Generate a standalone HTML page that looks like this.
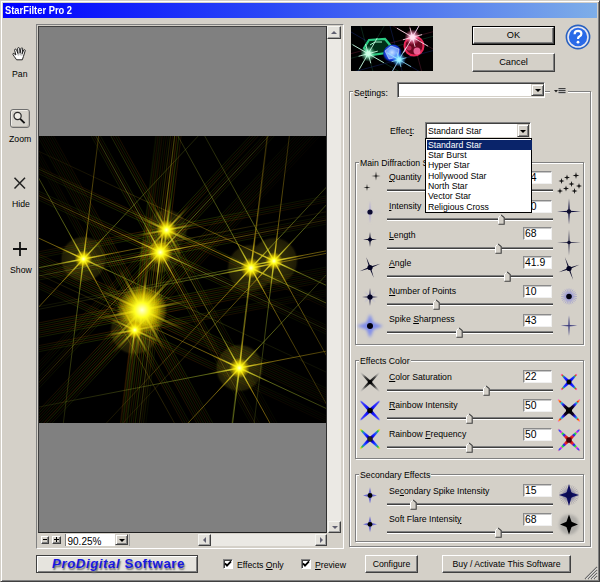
<!DOCTYPE html>
<html><head><meta charset="utf-8">
<style>
*{margin:0;padding:0;box-sizing:border-box}
html,body{width:600px;height:582px;overflow:hidden;background:#d4d0c8}
body{position:relative;font-family:"Liberation Sans",sans-serif;font-size:8.7px;color:#000}
.a{position:absolute}
.t{position:absolute;white-space:nowrap;font-size:8.7px;line-height:10px}
.btn{position:absolute;background:#d4d0c8;border-top:1px solid #fff;border-left:1px solid #fff;border-right:1px solid #404040;border-bottom:1px solid #404040;box-shadow:inset -1px -1px 0 #808080;text-align:center;font-size:8.7px}
.sunk{position:absolute;border-top:1px solid #808080;border-left:1px solid #808080;border-right:1px solid #fff;border-bottom:1px solid #fff;box-shadow:inset 1px 1px 0 #404040, inset -1px -1px 0 #d4d0c8}
.grp{position:absolute;border:1px solid #808080;box-shadow:1px 1px 0 #fff, inset 1px 1px 0 #fff}
.gl{position:absolute;background:#d4d0c8;padding:0 1px;font-size:8.7px;line-height:10px;white-space:nowrap}
.track{position:absolute;height:3px;border-top:1px solid #808080;border-bottom:1px solid #fff;background:#404040}
.thumb{position:absolute;width:7px;height:10px}
.edit{position:absolute;width:29px;height:13px;background:#fff;border-top:1px solid #8a8a8a;border-left:1px solid #8a8a8a;border-right:1px solid #f0f0f0;border-bottom:1px solid #f0f0f0;box-shadow:inset 1px 1px 0 #c8c8c8;font-size:10.4px;line-height:12px;padding:0 0 0 1px}
.ddb{position:absolute;background:#d4d0c8;border-top:1px solid #d4d0c8;border-left:1px solid #d4d0c8;border-right:1px solid #404040;border-bottom:1px solid #404040;box-shadow:inset 1px 1px 0 #fff, inset -1px -1px 0 #808080}
.ddb:after{content:"";position:absolute;left:50%;top:50%;margin-left:-3px;margin-top:-1px;border-left:3px solid transparent;border-right:3px solid transparent;border-top:3px solid #000}
.sb{position:absolute;background:#e4e2dc;border-top:1px solid #f4f4f0;border-left:1px solid #f4f4f0;border-right:1px solid #404040;border-bottom:1px solid #404040;box-shadow:inset -1px -1px 0 #a0a0a0}
.sb:after{content:"";position:absolute;left:50%;top:50%}
.sb.up:after{margin-left:-3px;margin-top:-2px;border-left:3px solid transparent;border-right:3px solid transparent;border-bottom:3px solid #606070}
.sb.dn:after{margin-left:-3px;margin-top:-1px;border-left:3px solid transparent;border-right:3px solid transparent;border-top:3px solid #606070}
.sb.lf:after{margin-left:-2px;margin-top:-3px;border-top:3px solid transparent;border-bottom:3px solid transparent;border-right:3px solid #606070}
.sb.rt:after{margin-left:-1px;margin-top:-3px;border-top:3px solid transparent;border-bottom:3px solid transparent;border-left:3px solid #606070}
u{text-decoration:underline}
.li{position:absolute;left:1px;width:105px;height:10px;line-height:10px;padding-left:1px;white-space:nowrap;font-size:8.7px}
</style></head><body>
<!-- window frame -->
<div class="a" style="left:0;top:0;width:600px;height:582px;border-top:1px solid #d4d0c8;border-left:1px solid #d4d0c8;border-right:1px solid #404040;border-bottom:1px solid #404040;box-shadow:inset 1px 1px 0 #fff, inset -1px -1px 0 #808080"></div>
<!-- title bar -->
<div class="a" style="left:3px;top:3px;width:594px;height:15px;background:linear-gradient(90deg,#0000ff 0%,#2a48f6 45%,#7eaee8 100%)"></div>
<div class="t" style="left:5px;top:4.5px;font-weight:bold;color:#fff;font-size:10px;line-height:12px;transform:scaleX(0.935);transform-origin:0 0">StarFilter Pro 2</div>

<!-- left toolbar -->
<svg class="a" style="left:12px;top:47px" width="15" height="14" viewBox="0 0 15 14">
<path d="M4.6 12.8 L2.2 9.4 L0.9 7.4 Q0.7 6.3 1.8 6.4 L3.9 8 L2.6 3.2 Q2.6 2 3.6 2.1 Q4.3 2.2 4.6 3 L6 6.6 L5.6 1.6 Q5.7 0.6 6.6 0.6 Q7.5 0.7 7.6 1.6 L8.1 6.2 L9 1.4 Q9.3 0.7 10.1 0.9 Q10.8 1.1 10.7 2 L10.1 6.8 L11.7 3.1 Q12.2 2.4 12.9 2.8 Q13.5 3.3 13.1 4.1 L11.4 9.6 L10.3 12.8 Z" fill="#fff" stroke="#1a1a1a" stroke-width="0.95" stroke-linejoin="round"/>
<path d="M6 6.6 L6.3 8.5 M8.1 6.2 L8.2 8.3 M10.1 6.8 L9.8 8.6" stroke="#555" stroke-width="0.6"/>
</svg>
<div class="t" style="left:12px;top:69px">Pan</div>
<div class="a" style="left:10px;top:109px;width:20px;height:19px;border:1.5px solid #6e6e6e;border-radius:3px;background:#d6d3cc;box-shadow:inset 1px 1px 0 #f0eee8, inset -1px -1px 0 #b8b4ac"></div>
<svg class="a" style="left:12px;top:110px" width="16" height="16" viewBox="0 0 16 16">
<circle cx="5.6" cy="6" r="3.6" fill="#eeece6" stroke="#2a2a2a" stroke-width="1.2"/>
<line x1="8.2" y1="8.8" x2="12.6" y2="13.2" stroke="#111" stroke-width="1.9"/>
</svg>
<div class="t" style="left:9px;top:134px">Zoom</div>
<svg class="a" style="left:13px;top:177px" width="14" height="13" viewBox="0 0 14 13">
<path d="M1.5 0.8 L12 11.5 M12 0.8 L1.5 11.5" stroke="#222" stroke-width="1.5"/>
</svg>
<div class="t" style="left:12px;top:199px">Hide</div>
<svg class="a" style="left:12px;top:241px" width="16" height="16" viewBox="0 0 16 16">
<path d="M8 1 V15 M1 8 H15" stroke="#111" stroke-width="1.8"/>
</svg>
<div class="t" style="left:10px;top:265px">Show</div>

<!-- viewport -->
<div class="a" style="left:36px;top:24px;width:308px;height:525px;border-top:1px solid #808080;border-left:1px solid #808080;border-right:1px solid #fff;border-bottom:1px solid #fff;background:#d4d0c8"></div>
<div class="a" style="left:38px;top:26px;width:290px;height:507px;border-top:1px solid #404040;border-left:1px solid #404040;border-right:1px solid #202020;border-bottom:1px solid #202020;background:#808080"></div>
<div id="stars" class="a" style="left:39px;top:136px;width:288px;height:287px;background:#000"><svg width="288" height="287" viewBox="0 0 288 287" style="display:block"><defs><filter id="sb" x="-10%" y="-10%" width="120%" height="120%"><feGaussianBlur stdDeviation="0.45"/></filter><radialGradient id="halo"><stop offset="0" stop-color="#4a4408"/><stop offset="0.6" stop-color="#302c08"/><stop offset="0.88" stop-color="#242006"/><stop offset="1" stop-color="#000" stop-opacity="0"/></radialGradient><radialGradient id="core"><stop offset="0" stop-color="#ffffd0"/><stop offset="0.3" stop-color="#ffff20"/><stop offset="0.6" stop-color="#f0d800" stop-opacity="0.7"/><stop offset="1" stop-color="#c0a000" stop-opacity="0"/></radialGradient><radialGradient id="fade"><stop offset="0" stop-color="#fff"/><stop offset="0.1" stop-color="#c0c0c0"/><stop offset="0.3" stop-color="#707070"/><stop offset="0.6" stop-color="#303030"/><stop offset="1" stop-color="#101010"/></radialGradient><mask id="m0" maskUnits="userSpaceOnUse" x="0" y="0" width="288" height="287"><circle cx="44.5" cy="123.0" r="320" fill="url(#fade)"/></mask><linearGradient id="g1" gradientUnits="userSpaceOnUse" x1="44.5" y1="123.0" x2="73.1" y2="136.4"><stop offset="0" stop-color="#ffff40"/><stop offset="1" stop-color="#c0a000" stop-opacity="0"/></linearGradient><linearGradient id="g2" gradientUnits="userSpaceOnUse" x1="44.5" y1="123.0" x2="59.8" y2="150.6"><stop offset="0" stop-color="#ffff40"/><stop offset="1" stop-color="#c0a000" stop-opacity="0"/></linearGradient><linearGradient id="g3" gradientUnits="userSpaceOnUse" x1="44.5" y1="123.0" x2="40.6" y2="154.4"><stop offset="0" stop-color="#ffff40"/><stop offset="1" stop-color="#c0a000" stop-opacity="0"/></linearGradient><linearGradient id="g4" gradientUnits="userSpaceOnUse" x1="44.5" y1="123.0" x2="22.9" y2="146.1"><stop offset="0" stop-color="#ffff40"/><stop offset="1" stop-color="#c0a000" stop-opacity="0"/></linearGradient><linearGradient id="g5" gradientUnits="userSpaceOnUse" x1="44.5" y1="123.0" x2="13.5" y2="129.0"><stop offset="0" stop-color="#ffff40"/><stop offset="1" stop-color="#c0a000" stop-opacity="0"/></linearGradient><linearGradient id="g6" gradientUnits="userSpaceOnUse" x1="44.5" y1="123.0" x2="15.9" y2="109.6"><stop offset="0" stop-color="#ffff40"/><stop offset="1" stop-color="#c0a000" stop-opacity="0"/></linearGradient><linearGradient id="g7" gradientUnits="userSpaceOnUse" x1="44.5" y1="123.0" x2="29.2" y2="95.4"><stop offset="0" stop-color="#ffff40"/><stop offset="1" stop-color="#c0a000" stop-opacity="0"/></linearGradient><linearGradient id="g8" gradientUnits="userSpaceOnUse" x1="44.5" y1="123.0" x2="48.4" y2="91.6"><stop offset="0" stop-color="#ffff40"/><stop offset="1" stop-color="#c0a000" stop-opacity="0"/></linearGradient><linearGradient id="g9" gradientUnits="userSpaceOnUse" x1="44.5" y1="123.0" x2="66.1" y2="99.9"><stop offset="0" stop-color="#ffff40"/><stop offset="1" stop-color="#c0a000" stop-opacity="0"/></linearGradient><linearGradient id="g10" gradientUnits="userSpaceOnUse" x1="44.5" y1="123.0" x2="75.5" y2="117.0"><stop offset="0" stop-color="#ffff40"/><stop offset="1" stop-color="#c0a000" stop-opacity="0"/></linearGradient><mask id="m1" maskUnits="userSpaceOnUse" x="0" y="0" width="288" height="287"><circle cx="127.5" cy="94.0" r="320" fill="url(#fade)"/></mask><linearGradient id="g11" gradientUnits="userSpaceOnUse" x1="127.5" y1="94.0" x2="157.6" y2="108.0"><stop offset="0" stop-color="#ffff40"/><stop offset="1" stop-color="#c0a000" stop-opacity="0"/></linearGradient><linearGradient id="g12" gradientUnits="userSpaceOnUse" x1="127.5" y1="94.0" x2="143.6" y2="123.0"><stop offset="0" stop-color="#ffff40"/><stop offset="1" stop-color="#c0a000" stop-opacity="0"/></linearGradient><linearGradient id="g13" gradientUnits="userSpaceOnUse" x1="127.5" y1="94.0" x2="123.5" y2="127.0"><stop offset="0" stop-color="#ffff40"/><stop offset="1" stop-color="#c0a000" stop-opacity="0"/></linearGradient><linearGradient id="g14" gradientUnits="userSpaceOnUse" x1="127.5" y1="94.0" x2="104.9" y2="118.3"><stop offset="0" stop-color="#ffff40"/><stop offset="1" stop-color="#c0a000" stop-opacity="0"/></linearGradient><linearGradient id="g15" gradientUnits="userSpaceOnUse" x1="127.5" y1="94.0" x2="94.9" y2="100.3"><stop offset="0" stop-color="#ffff40"/><stop offset="1" stop-color="#c0a000" stop-opacity="0"/></linearGradient><linearGradient id="g16" gradientUnits="userSpaceOnUse" x1="127.5" y1="94.0" x2="97.4" y2="80.0"><stop offset="0" stop-color="#ffff40"/><stop offset="1" stop-color="#c0a000" stop-opacity="0"/></linearGradient><linearGradient id="g17" gradientUnits="userSpaceOnUse" x1="127.5" y1="94.0" x2="111.4" y2="65.0"><stop offset="0" stop-color="#ffff40"/><stop offset="1" stop-color="#c0a000" stop-opacity="0"/></linearGradient><linearGradient id="g18" gradientUnits="userSpaceOnUse" x1="127.5" y1="94.0" x2="131.5" y2="61.0"><stop offset="0" stop-color="#ffff40"/><stop offset="1" stop-color="#c0a000" stop-opacity="0"/></linearGradient><linearGradient id="g19" gradientUnits="userSpaceOnUse" x1="127.5" y1="94.0" x2="150.1" y2="69.7"><stop offset="0" stop-color="#ffff40"/><stop offset="1" stop-color="#c0a000" stop-opacity="0"/></linearGradient><linearGradient id="g20" gradientUnits="userSpaceOnUse" x1="127.5" y1="94.0" x2="160.1" y2="87.7"><stop offset="0" stop-color="#ffff40"/><stop offset="1" stop-color="#c0a000" stop-opacity="0"/></linearGradient><mask id="m2" maskUnits="userSpaceOnUse" x="0" y="0" width="288" height="287"><circle cx="121.3" cy="116.3" r="320" fill="url(#fade)"/></mask><linearGradient id="g21" gradientUnits="userSpaceOnUse" x1="121.3" y1="116.3" x2="153.4" y2="131.3"><stop offset="0" stop-color="#ffff40"/><stop offset="1" stop-color="#c0a000" stop-opacity="0"/></linearGradient><linearGradient id="g22" gradientUnits="userSpaceOnUse" x1="121.3" y1="116.3" x2="138.5" y2="147.3"><stop offset="0" stop-color="#ffff40"/><stop offset="1" stop-color="#c0a000" stop-opacity="0"/></linearGradient><linearGradient id="g23" gradientUnits="userSpaceOnUse" x1="121.3" y1="116.3" x2="117.0" y2="151.5"><stop offset="0" stop-color="#ffff40"/><stop offset="1" stop-color="#c0a000" stop-opacity="0"/></linearGradient><linearGradient id="g24" gradientUnits="userSpaceOnUse" x1="121.3" y1="116.3" x2="97.1" y2="142.2"><stop offset="0" stop-color="#ffff40"/><stop offset="1" stop-color="#c0a000" stop-opacity="0"/></linearGradient><linearGradient id="g25" gradientUnits="userSpaceOnUse" x1="121.3" y1="116.3" x2="86.5" y2="123.1"><stop offset="0" stop-color="#ffff40"/><stop offset="1" stop-color="#c0a000" stop-opacity="0"/></linearGradient><linearGradient id="g26" gradientUnits="userSpaceOnUse" x1="121.3" y1="116.3" x2="89.2" y2="101.3"><stop offset="0" stop-color="#ffff40"/><stop offset="1" stop-color="#c0a000" stop-opacity="0"/></linearGradient><linearGradient id="g27" gradientUnits="userSpaceOnUse" x1="121.3" y1="116.3" x2="104.1" y2="85.3"><stop offset="0" stop-color="#ffff40"/><stop offset="1" stop-color="#c0a000" stop-opacity="0"/></linearGradient><linearGradient id="g28" gradientUnits="userSpaceOnUse" x1="121.3" y1="116.3" x2="125.6" y2="81.1"><stop offset="0" stop-color="#ffff40"/><stop offset="1" stop-color="#c0a000" stop-opacity="0"/></linearGradient><linearGradient id="g29" gradientUnits="userSpaceOnUse" x1="121.3" y1="116.3" x2="145.5" y2="90.4"><stop offset="0" stop-color="#ffff40"/><stop offset="1" stop-color="#c0a000" stop-opacity="0"/></linearGradient><linearGradient id="g30" gradientUnits="userSpaceOnUse" x1="121.3" y1="116.3" x2="156.1" y2="109.5"><stop offset="0" stop-color="#ffff40"/><stop offset="1" stop-color="#c0a000" stop-opacity="0"/></linearGradient><mask id="m3" maskUnits="userSpaceOnUse" x="0" y="0" width="288" height="287"><circle cx="103.0" cy="174.0" r="340" fill="url(#fade)"/></mask><linearGradient id="g31" gradientUnits="userSpaceOnUse" x1="103.0" y1="174.0" x2="147.6" y2="194.8"><stop offset="0" stop-color="#ffff40"/><stop offset="1" stop-color="#c0a000" stop-opacity="0"/></linearGradient><linearGradient id="g32" gradientUnits="userSpaceOnUse" x1="103.0" y1="174.0" x2="126.9" y2="217.0"><stop offset="0" stop-color="#ffff40"/><stop offset="1" stop-color="#c0a000" stop-opacity="0"/></linearGradient><linearGradient id="g33" gradientUnits="userSpaceOnUse" x1="103.0" y1="174.0" x2="97.0" y2="222.8"><stop offset="0" stop-color="#ffff40"/><stop offset="1" stop-color="#c0a000" stop-opacity="0"/></linearGradient><linearGradient id="g34" gradientUnits="userSpaceOnUse" x1="103.0" y1="174.0" x2="69.4" y2="210.0"><stop offset="0" stop-color="#ffff40"/><stop offset="1" stop-color="#c0a000" stop-opacity="0"/></linearGradient><linearGradient id="g35" gradientUnits="userSpaceOnUse" x1="103.0" y1="174.0" x2="54.7" y2="183.4"><stop offset="0" stop-color="#ffff40"/><stop offset="1" stop-color="#c0a000" stop-opacity="0"/></linearGradient><linearGradient id="g36" gradientUnits="userSpaceOnUse" x1="103.0" y1="174.0" x2="58.4" y2="153.2"><stop offset="0" stop-color="#ffff40"/><stop offset="1" stop-color="#c0a000" stop-opacity="0"/></linearGradient><linearGradient id="g37" gradientUnits="userSpaceOnUse" x1="103.0" y1="174.0" x2="79.1" y2="131.0"><stop offset="0" stop-color="#ffff40"/><stop offset="1" stop-color="#c0a000" stop-opacity="0"/></linearGradient><linearGradient id="g38" gradientUnits="userSpaceOnUse" x1="103.0" y1="174.0" x2="109.0" y2="125.2"><stop offset="0" stop-color="#ffff40"/><stop offset="1" stop-color="#c0a000" stop-opacity="0"/></linearGradient><linearGradient id="g39" gradientUnits="userSpaceOnUse" x1="103.0" y1="174.0" x2="136.6" y2="138.0"><stop offset="0" stop-color="#ffff40"/><stop offset="1" stop-color="#c0a000" stop-opacity="0"/></linearGradient><linearGradient id="g40" gradientUnits="userSpaceOnUse" x1="103.0" y1="174.0" x2="151.3" y2="164.6"><stop offset="0" stop-color="#ffff40"/><stop offset="1" stop-color="#c0a000" stop-opacity="0"/></linearGradient><mask id="m4" maskUnits="userSpaceOnUse" x="0" y="0" width="288" height="287"><circle cx="95.8" cy="194.0" r="300" fill="url(#fade)"/></mask><linearGradient id="g41" gradientUnits="userSpaceOnUse" x1="95.8" y1="194.0" x2="124.4" y2="207.4"><stop offset="0" stop-color="#ffff40"/><stop offset="1" stop-color="#c0a000" stop-opacity="0"/></linearGradient><linearGradient id="g42" gradientUnits="userSpaceOnUse" x1="95.8" y1="194.0" x2="111.1" y2="221.6"><stop offset="0" stop-color="#ffff40"/><stop offset="1" stop-color="#c0a000" stop-opacity="0"/></linearGradient><linearGradient id="g43" gradientUnits="userSpaceOnUse" x1="95.8" y1="194.0" x2="91.9" y2="225.4"><stop offset="0" stop-color="#ffff40"/><stop offset="1" stop-color="#c0a000" stop-opacity="0"/></linearGradient><linearGradient id="g44" gradientUnits="userSpaceOnUse" x1="95.8" y1="194.0" x2="74.2" y2="217.1"><stop offset="0" stop-color="#ffff40"/><stop offset="1" stop-color="#c0a000" stop-opacity="0"/></linearGradient><linearGradient id="g45" gradientUnits="userSpaceOnUse" x1="95.8" y1="194.0" x2="64.8" y2="200.0"><stop offset="0" stop-color="#ffff40"/><stop offset="1" stop-color="#c0a000" stop-opacity="0"/></linearGradient><linearGradient id="g46" gradientUnits="userSpaceOnUse" x1="95.8" y1="194.0" x2="67.2" y2="180.6"><stop offset="0" stop-color="#ffff40"/><stop offset="1" stop-color="#c0a000" stop-opacity="0"/></linearGradient><linearGradient id="g47" gradientUnits="userSpaceOnUse" x1="95.8" y1="194.0" x2="80.5" y2="166.4"><stop offset="0" stop-color="#ffff40"/><stop offset="1" stop-color="#c0a000" stop-opacity="0"/></linearGradient><linearGradient id="g48" gradientUnits="userSpaceOnUse" x1="95.8" y1="194.0" x2="99.7" y2="162.6"><stop offset="0" stop-color="#ffff40"/><stop offset="1" stop-color="#c0a000" stop-opacity="0"/></linearGradient><linearGradient id="g49" gradientUnits="userSpaceOnUse" x1="95.8" y1="194.0" x2="117.4" y2="170.9"><stop offset="0" stop-color="#ffff40"/><stop offset="1" stop-color="#c0a000" stop-opacity="0"/></linearGradient><linearGradient id="g50" gradientUnits="userSpaceOnUse" x1="95.8" y1="194.0" x2="126.8" y2="188.0"><stop offset="0" stop-color="#ffff40"/><stop offset="1" stop-color="#c0a000" stop-opacity="0"/></linearGradient><mask id="m5" maskUnits="userSpaceOnUse" x="0" y="0" width="288" height="287"><circle cx="212.0" cy="132.0" r="320" fill="url(#fade)"/></mask><linearGradient id="g51" gradientUnits="userSpaceOnUse" x1="212.0" y1="132.0" x2="242.1" y2="146.0"><stop offset="0" stop-color="#ffff40"/><stop offset="1" stop-color="#c0a000" stop-opacity="0"/></linearGradient><linearGradient id="g52" gradientUnits="userSpaceOnUse" x1="212.0" y1="132.0" x2="228.1" y2="161.0"><stop offset="0" stop-color="#ffff40"/><stop offset="1" stop-color="#c0a000" stop-opacity="0"/></linearGradient><linearGradient id="g53" gradientUnits="userSpaceOnUse" x1="212.0" y1="132.0" x2="208.0" y2="165.0"><stop offset="0" stop-color="#ffff40"/><stop offset="1" stop-color="#c0a000" stop-opacity="0"/></linearGradient><linearGradient id="g54" gradientUnits="userSpaceOnUse" x1="212.0" y1="132.0" x2="189.4" y2="156.3"><stop offset="0" stop-color="#ffff40"/><stop offset="1" stop-color="#c0a000" stop-opacity="0"/></linearGradient><linearGradient id="g55" gradientUnits="userSpaceOnUse" x1="212.0" y1="132.0" x2="179.4" y2="138.3"><stop offset="0" stop-color="#ffff40"/><stop offset="1" stop-color="#c0a000" stop-opacity="0"/></linearGradient><linearGradient id="g56" gradientUnits="userSpaceOnUse" x1="212.0" y1="132.0" x2="181.9" y2="118.0"><stop offset="0" stop-color="#ffff40"/><stop offset="1" stop-color="#c0a000" stop-opacity="0"/></linearGradient><linearGradient id="g57" gradientUnits="userSpaceOnUse" x1="212.0" y1="132.0" x2="195.9" y2="103.0"><stop offset="0" stop-color="#ffff40"/><stop offset="1" stop-color="#c0a000" stop-opacity="0"/></linearGradient><linearGradient id="g58" gradientUnits="userSpaceOnUse" x1="212.0" y1="132.0" x2="216.0" y2="99.0"><stop offset="0" stop-color="#ffff40"/><stop offset="1" stop-color="#c0a000" stop-opacity="0"/></linearGradient><linearGradient id="g59" gradientUnits="userSpaceOnUse" x1="212.0" y1="132.0" x2="234.6" y2="107.7"><stop offset="0" stop-color="#ffff40"/><stop offset="1" stop-color="#c0a000" stop-opacity="0"/></linearGradient><linearGradient id="g60" gradientUnits="userSpaceOnUse" x1="212.0" y1="132.0" x2="244.6" y2="125.7"><stop offset="0" stop-color="#ffff40"/><stop offset="1" stop-color="#c0a000" stop-opacity="0"/></linearGradient><mask id="m6" maskUnits="userSpaceOnUse" x="0" y="0" width="288" height="287"><circle cx="235.0" cy="125.0" r="300" fill="url(#fade)"/></mask><linearGradient id="g61" gradientUnits="userSpaceOnUse" x1="235.0" y1="125.0" x2="263.6" y2="138.4"><stop offset="0" stop-color="#ffff40"/><stop offset="1" stop-color="#c0a000" stop-opacity="0"/></linearGradient><linearGradient id="g62" gradientUnits="userSpaceOnUse" x1="235.0" y1="125.0" x2="250.3" y2="152.6"><stop offset="0" stop-color="#ffff40"/><stop offset="1" stop-color="#c0a000" stop-opacity="0"/></linearGradient><linearGradient id="g63" gradientUnits="userSpaceOnUse" x1="235.0" y1="125.0" x2="231.1" y2="156.4"><stop offset="0" stop-color="#ffff40"/><stop offset="1" stop-color="#c0a000" stop-opacity="0"/></linearGradient><linearGradient id="g64" gradientUnits="userSpaceOnUse" x1="235.0" y1="125.0" x2="213.4" y2="148.1"><stop offset="0" stop-color="#ffff40"/><stop offset="1" stop-color="#c0a000" stop-opacity="0"/></linearGradient><linearGradient id="g65" gradientUnits="userSpaceOnUse" x1="235.0" y1="125.0" x2="204.0" y2="131.0"><stop offset="0" stop-color="#ffff40"/><stop offset="1" stop-color="#c0a000" stop-opacity="0"/></linearGradient><linearGradient id="g66" gradientUnits="userSpaceOnUse" x1="235.0" y1="125.0" x2="206.4" y2="111.6"><stop offset="0" stop-color="#ffff40"/><stop offset="1" stop-color="#c0a000" stop-opacity="0"/></linearGradient><linearGradient id="g67" gradientUnits="userSpaceOnUse" x1="235.0" y1="125.0" x2="219.7" y2="97.4"><stop offset="0" stop-color="#ffff40"/><stop offset="1" stop-color="#c0a000" stop-opacity="0"/></linearGradient><linearGradient id="g68" gradientUnits="userSpaceOnUse" x1="235.0" y1="125.0" x2="238.9" y2="93.6"><stop offset="0" stop-color="#ffff40"/><stop offset="1" stop-color="#c0a000" stop-opacity="0"/></linearGradient><linearGradient id="g69" gradientUnits="userSpaceOnUse" x1="235.0" y1="125.0" x2="256.6" y2="101.9"><stop offset="0" stop-color="#ffff40"/><stop offset="1" stop-color="#c0a000" stop-opacity="0"/></linearGradient><linearGradient id="g70" gradientUnits="userSpaceOnUse" x1="235.0" y1="125.0" x2="266.0" y2="119.0"><stop offset="0" stop-color="#ffff40"/><stop offset="1" stop-color="#c0a000" stop-opacity="0"/></linearGradient><mask id="m7" maskUnits="userSpaceOnUse" x="0" y="0" width="288" height="287"><circle cx="200.4" cy="232.0" r="320" fill="url(#fade)"/></mask><linearGradient id="g71" gradientUnits="userSpaceOnUse" x1="200.4" y1="232.0" x2="230.5" y2="246.0"><stop offset="0" stop-color="#ffff40"/><stop offset="1" stop-color="#c0a000" stop-opacity="0"/></linearGradient><linearGradient id="g72" gradientUnits="userSpaceOnUse" x1="200.4" y1="232.0" x2="216.5" y2="261.0"><stop offset="0" stop-color="#ffff40"/><stop offset="1" stop-color="#c0a000" stop-opacity="0"/></linearGradient><linearGradient id="g73" gradientUnits="userSpaceOnUse" x1="200.4" y1="232.0" x2="196.4" y2="265.0"><stop offset="0" stop-color="#ffff40"/><stop offset="1" stop-color="#c0a000" stop-opacity="0"/></linearGradient><linearGradient id="g74" gradientUnits="userSpaceOnUse" x1="200.4" y1="232.0" x2="177.8" y2="256.3"><stop offset="0" stop-color="#ffff40"/><stop offset="1" stop-color="#c0a000" stop-opacity="0"/></linearGradient><linearGradient id="g75" gradientUnits="userSpaceOnUse" x1="200.4" y1="232.0" x2="167.8" y2="238.3"><stop offset="0" stop-color="#ffff40"/><stop offset="1" stop-color="#c0a000" stop-opacity="0"/></linearGradient><linearGradient id="g76" gradientUnits="userSpaceOnUse" x1="200.4" y1="232.0" x2="170.3" y2="218.0"><stop offset="0" stop-color="#ffff40"/><stop offset="1" stop-color="#c0a000" stop-opacity="0"/></linearGradient><linearGradient id="g77" gradientUnits="userSpaceOnUse" x1="200.4" y1="232.0" x2="184.3" y2="203.0"><stop offset="0" stop-color="#ffff40"/><stop offset="1" stop-color="#c0a000" stop-opacity="0"/></linearGradient><linearGradient id="g78" gradientUnits="userSpaceOnUse" x1="200.4" y1="232.0" x2="204.4" y2="199.0"><stop offset="0" stop-color="#ffff40"/><stop offset="1" stop-color="#c0a000" stop-opacity="0"/></linearGradient><linearGradient id="g79" gradientUnits="userSpaceOnUse" x1="200.4" y1="232.0" x2="223.0" y2="207.7"><stop offset="0" stop-color="#ffff40"/><stop offset="1" stop-color="#c0a000" stop-opacity="0"/></linearGradient><linearGradient id="g80" gradientUnits="userSpaceOnUse" x1="200.4" y1="232.0" x2="233.0" y2="225.7"><stop offset="0" stop-color="#ffff40"/><stop offset="1" stop-color="#c0a000" stop-opacity="0"/></linearGradient></defs><rect width="288" height="287" fill="#000"/><circle cx="44.5" cy="123.0" r="24" fill="url(#halo)" fill-opacity="0.85"/><circle cx="127.5" cy="94.0" r="22" fill="url(#halo)" fill-opacity="0.7"/><circle cx="121.3" cy="116.3" r="22" fill="url(#halo)" fill-opacity="0.7"/><circle cx="103.0" cy="174.0" r="26" fill="url(#halo)" fill-opacity="0.7"/><circle cx="95.8" cy="194.0" r="26" fill="url(#halo)" fill-opacity="0.85"/><circle cx="212.0" cy="132.0" r="25" fill="url(#halo)" fill-opacity="0.85"/><circle cx="235.0" cy="125.0" r="25" fill="url(#halo)" fill-opacity="0.85"/><circle cx="200.4" cy="232.0" r="25" fill="url(#halo)" fill-opacity="0.9"/><g mask="url(#m0)" filter="url(#sb)"><line x1="44.5" y1="123.0" x2="334.5" y2="258.2" stroke="#98a828" stroke-opacity="0.85" stroke-width="0.9"/><line x1="44.5" y1="123.0" x2="199.6" y2="402.9" stroke="#c0a018" stroke-opacity="0.85" stroke-width="0.9"/><line x1="44.5" y1="123.0" x2="5.5" y2="440.6" stroke="#98a828" stroke-opacity="0.85" stroke-width="0.9"/><line x1="44.5" y1="123.0" x2="-173.7" y2="357.0" stroke="#c0a018" stroke-opacity="0.85" stroke-width="0.9"/><line x1="44.5" y1="123.0" x2="-269.6" y2="184.1" stroke="#98a828" stroke-opacity="0.85" stroke-width="0.9"/><line x1="44.5" y1="123.0" x2="-245.5" y2="-12.2" stroke="#c0a018" stroke-opacity="0.85" stroke-width="0.9"/><line x1="44.5" y1="123.0" x2="-110.6" y2="-156.9" stroke="#98a828" stroke-opacity="0.85" stroke-width="0.9"/><line x1="44.5" y1="123.0" x2="83.5" y2="-194.6" stroke="#c0a018" stroke-opacity="0.85" stroke-width="0.9"/><line x1="44.5" y1="123.0" x2="262.7" y2="-111.0" stroke="#98a828" stroke-opacity="0.85" stroke-width="0.9"/><line x1="44.5" y1="123.0" x2="358.6" y2="61.9" stroke="#c0a018" stroke-opacity="0.85" stroke-width="0.9"/></g><line x1="44.5" y1="123.0" x2="73.1" y2="136.4" stroke="url(#g1)" stroke-width="1.44"/><line x1="44.5" y1="123.0" x2="59.8" y2="150.6" stroke="url(#g2)" stroke-width="1.44"/><line x1="44.5" y1="123.0" x2="40.6" y2="154.4" stroke="url(#g3)" stroke-width="1.44"/><line x1="44.5" y1="123.0" x2="22.9" y2="146.1" stroke="url(#g4)" stroke-width="1.44"/><line x1="44.5" y1="123.0" x2="13.5" y2="129.0" stroke="url(#g5)" stroke-width="1.44"/><line x1="44.5" y1="123.0" x2="15.9" y2="109.6" stroke="url(#g6)" stroke-width="1.44"/><line x1="44.5" y1="123.0" x2="29.2" y2="95.4" stroke="url(#g7)" stroke-width="1.44"/><line x1="44.5" y1="123.0" x2="48.4" y2="91.6" stroke="url(#g8)" stroke-width="1.44"/><line x1="44.5" y1="123.0" x2="66.1" y2="99.9" stroke="url(#g9)" stroke-width="1.44"/><line x1="44.5" y1="123.0" x2="75.5" y2="117.0" stroke="url(#g10)" stroke-width="1.44"/><g mask="url(#m1)" filter="url(#sb)"><line x1="128.8" y1="91.3" x2="418.8" y2="226.5" stroke="#70a010" stroke-opacity="0.38" stroke-width="0.9"/><line x1="127.9" y1="93.1" x2="417.9" y2="228.3" stroke="#b86000" stroke-opacity="0.38" stroke-width="0.9"/><line x1="127.1" y1="94.9" x2="417.1" y2="230.1" stroke="#70a010" stroke-opacity="0.38" stroke-width="0.9"/><line x1="126.2" y1="96.7" x2="416.3" y2="232.0" stroke="#b86000" stroke-opacity="0.38" stroke-width="0.9"/><line x1="130.1" y1="92.5" x2="285.3" y2="372.4" stroke="#70a010" stroke-opacity="0.38" stroke-width="0.9"/><line x1="128.4" y1="93.5" x2="283.5" y2="373.4" stroke="#b86000" stroke-opacity="0.38" stroke-width="0.9"/><line x1="126.6" y1="94.5" x2="281.8" y2="374.4" stroke="#70a010" stroke-opacity="0.38" stroke-width="0.9"/><line x1="124.9" y1="95.5" x2="280.0" y2="375.3" stroke="#b86000" stroke-opacity="0.38" stroke-width="0.9"/><line x1="130.5" y1="94.4" x2="91.5" y2="412.0" stroke="#70a010" stroke-opacity="0.38" stroke-width="0.9"/><line x1="128.5" y1="94.1" x2="89.5" y2="411.7" stroke="#b86000" stroke-opacity="0.38" stroke-width="0.9"/><line x1="126.5" y1="93.9" x2="87.5" y2="411.5" stroke="#70a010" stroke-opacity="0.38" stroke-width="0.9"/><line x1="124.5" y1="93.6" x2="85.5" y2="411.2" stroke="#b86000" stroke-opacity="0.38" stroke-width="0.9"/><line x1="129.7" y1="96.0" x2="-88.5" y2="330.1" stroke="#70a010" stroke-opacity="0.38" stroke-width="0.9"/><line x1="128.2" y1="94.7" x2="-90.0" y2="328.7" stroke="#b86000" stroke-opacity="0.38" stroke-width="0.9"/><line x1="126.8" y1="93.3" x2="-91.5" y2="327.4" stroke="#70a010" stroke-opacity="0.38" stroke-width="0.9"/><line x1="125.3" y1="92.0" x2="-92.9" y2="326.0" stroke="#b86000" stroke-opacity="0.38" stroke-width="0.9"/><line x1="128.1" y1="96.9" x2="-186.0" y2="158.0" stroke="#70a010" stroke-opacity="0.38" stroke-width="0.9"/><line x1="127.7" y1="95.0" x2="-186.4" y2="156.0" stroke="#b86000" stroke-opacity="0.38" stroke-width="0.9"/><line x1="127.3" y1="93.0" x2="-186.8" y2="154.1" stroke="#70a010" stroke-opacity="0.38" stroke-width="0.9"/><line x1="126.9" y1="91.1" x2="-187.2" y2="152.1" stroke="#b86000" stroke-opacity="0.38" stroke-width="0.9"/><line x1="126.2" y1="96.7" x2="-163.8" y2="-38.5" stroke="#70a010" stroke-opacity="0.38" stroke-width="0.9"/><line x1="127.1" y1="94.9" x2="-162.9" y2="-40.3" stroke="#b86000" stroke-opacity="0.38" stroke-width="0.9"/><line x1="127.9" y1="93.1" x2="-162.1" y2="-42.1" stroke="#70a010" stroke-opacity="0.38" stroke-width="0.9"/><line x1="128.8" y1="91.3" x2="-161.3" y2="-44.0" stroke="#b86000" stroke-opacity="0.38" stroke-width="0.9"/><line x1="124.9" y1="95.5" x2="-30.3" y2="-184.4" stroke="#70a010" stroke-opacity="0.38" stroke-width="0.9"/><line x1="126.6" y1="94.5" x2="-28.5" y2="-185.4" stroke="#b86000" stroke-opacity="0.38" stroke-width="0.9"/><line x1="128.4" y1="93.5" x2="-26.8" y2="-186.4" stroke="#70a010" stroke-opacity="0.38" stroke-width="0.9"/><line x1="130.1" y1="92.5" x2="-25.0" y2="-187.3" stroke="#b86000" stroke-opacity="0.38" stroke-width="0.9"/><line x1="124.5" y1="93.6" x2="163.5" y2="-224.0" stroke="#70a010" stroke-opacity="0.38" stroke-width="0.9"/><line x1="126.5" y1="93.9" x2="165.5" y2="-223.7" stroke="#b86000" stroke-opacity="0.38" stroke-width="0.9"/><line x1="128.5" y1="94.1" x2="167.5" y2="-223.5" stroke="#70a010" stroke-opacity="0.38" stroke-width="0.9"/><line x1="130.5" y1="94.4" x2="169.5" y2="-223.2" stroke="#b86000" stroke-opacity="0.38" stroke-width="0.9"/><line x1="125.3" y1="92.0" x2="343.5" y2="-142.1" stroke="#70a010" stroke-opacity="0.38" stroke-width="0.9"/><line x1="126.8" y1="93.3" x2="345.0" y2="-140.7" stroke="#b86000" stroke-opacity="0.38" stroke-width="0.9"/><line x1="128.2" y1="94.7" x2="346.5" y2="-139.4" stroke="#70a010" stroke-opacity="0.38" stroke-width="0.9"/><line x1="129.7" y1="96.0" x2="347.9" y2="-138.0" stroke="#b86000" stroke-opacity="0.38" stroke-width="0.9"/><line x1="126.9" y1="91.1" x2="441.0" y2="30.0" stroke="#70a010" stroke-opacity="0.38" stroke-width="0.9"/><line x1="127.3" y1="93.0" x2="441.4" y2="32.0" stroke="#b86000" stroke-opacity="0.38" stroke-width="0.9"/><line x1="127.7" y1="95.0" x2="441.8" y2="33.9" stroke="#70a010" stroke-opacity="0.38" stroke-width="0.9"/><line x1="128.1" y1="96.9" x2="442.2" y2="35.9" stroke="#b86000" stroke-opacity="0.38" stroke-width="0.9"/></g><line x1="127.5" y1="94.0" x2="157.6" y2="108.0" stroke="url(#g11)" stroke-width="1.48"/><line x1="127.5" y1="94.0" x2="143.6" y2="123.0" stroke="url(#g12)" stroke-width="1.48"/><line x1="127.5" y1="94.0" x2="123.5" y2="127.0" stroke="url(#g13)" stroke-width="1.48"/><line x1="127.5" y1="94.0" x2="104.9" y2="118.3" stroke="url(#g14)" stroke-width="1.48"/><line x1="127.5" y1="94.0" x2="94.9" y2="100.3" stroke="url(#g15)" stroke-width="1.48"/><line x1="127.5" y1="94.0" x2="97.4" y2="80.0" stroke="url(#g16)" stroke-width="1.48"/><line x1="127.5" y1="94.0" x2="111.4" y2="65.0" stroke="url(#g17)" stroke-width="1.48"/><line x1="127.5" y1="94.0" x2="131.5" y2="61.0" stroke="url(#g18)" stroke-width="1.48"/><line x1="127.5" y1="94.0" x2="150.1" y2="69.7" stroke="url(#g19)" stroke-width="1.48"/><line x1="127.5" y1="94.0" x2="160.1" y2="87.7" stroke="url(#g20)" stroke-width="1.48"/><g mask="url(#m2)" filter="url(#sb)"><line x1="123.0" y1="112.7" x2="413.0" y2="247.9" stroke="#70a010" stroke-opacity="0.40" stroke-width="0.9"/><line x1="122.1" y1="114.5" x2="412.2" y2="249.7" stroke="#b86000" stroke-opacity="0.40" stroke-width="0.9"/><line x1="121.3" y1="116.3" x2="411.3" y2="251.5" stroke="#98a828" stroke-opacity="0.95" stroke-width="0.9"/><line x1="120.5" y1="118.1" x2="410.5" y2="253.4" stroke="#b86000" stroke-opacity="0.40" stroke-width="0.9"/><line x1="119.6" y1="119.9" x2="409.6" y2="255.2" stroke="#70a010" stroke-opacity="0.40" stroke-width="0.9"/><line x1="124.8" y1="114.4" x2="279.9" y2="394.2" stroke="#70a010" stroke-opacity="0.40" stroke-width="0.9"/><line x1="123.0" y1="115.3" x2="278.2" y2="395.2" stroke="#b86000" stroke-opacity="0.40" stroke-width="0.9"/><line x1="121.3" y1="116.3" x2="276.4" y2="396.2" stroke="#c0a018" stroke-opacity="0.95" stroke-width="0.9"/><line x1="119.6" y1="117.3" x2="274.7" y2="397.1" stroke="#b86000" stroke-opacity="0.40" stroke-width="0.9"/><line x1="117.8" y1="118.2" x2="272.9" y2="398.1" stroke="#70a010" stroke-opacity="0.40" stroke-width="0.9"/><line x1="125.3" y1="116.8" x2="86.3" y2="434.4" stroke="#70a010" stroke-opacity="0.40" stroke-width="0.9"/><line x1="123.3" y1="116.5" x2="84.3" y2="434.2" stroke="#b86000" stroke-opacity="0.40" stroke-width="0.9"/><line x1="121.3" y1="116.3" x2="82.3" y2="433.9" stroke="#98a828" stroke-opacity="0.95" stroke-width="0.9"/><line x1="119.3" y1="116.1" x2="80.3" y2="433.7" stroke="#b86000" stroke-opacity="0.40" stroke-width="0.9"/><line x1="117.3" y1="115.8" x2="78.3" y2="433.4" stroke="#70a010" stroke-opacity="0.40" stroke-width="0.9"/><line x1="124.2" y1="119.0" x2="-94.0" y2="353.1" stroke="#70a010" stroke-opacity="0.40" stroke-width="0.9"/><line x1="122.8" y1="117.7" x2="-95.5" y2="351.7" stroke="#b86000" stroke-opacity="0.40" stroke-width="0.9"/><line x1="121.3" y1="116.3" x2="-96.9" y2="350.3" stroke="#c0a018" stroke-opacity="0.95" stroke-width="0.9"/><line x1="119.8" y1="114.9" x2="-98.4" y2="349.0" stroke="#b86000" stroke-opacity="0.40" stroke-width="0.9"/><line x1="118.4" y1="113.6" x2="-99.9" y2="347.6" stroke="#70a010" stroke-opacity="0.40" stroke-width="0.9"/><line x1="122.1" y1="120.2" x2="-192.1" y2="181.3" stroke="#70a010" stroke-opacity="0.40" stroke-width="0.9"/><line x1="121.7" y1="118.3" x2="-192.4" y2="179.3" stroke="#b86000" stroke-opacity="0.40" stroke-width="0.9"/><line x1="121.3" y1="116.3" x2="-192.8" y2="177.4" stroke="#98a828" stroke-opacity="0.95" stroke-width="0.9"/><line x1="120.9" y1="114.3" x2="-193.2" y2="175.4" stroke="#b86000" stroke-opacity="0.40" stroke-width="0.9"/><line x1="120.5" y1="112.4" x2="-193.6" y2="173.4" stroke="#70a010" stroke-opacity="0.40" stroke-width="0.9"/><line x1="119.6" y1="119.9" x2="-170.4" y2="-15.3" stroke="#70a010" stroke-opacity="0.40" stroke-width="0.9"/><line x1="120.5" y1="118.1" x2="-169.6" y2="-17.1" stroke="#b86000" stroke-opacity="0.40" stroke-width="0.9"/><line x1="121.3" y1="116.3" x2="-168.7" y2="-18.9" stroke="#c0a018" stroke-opacity="0.95" stroke-width="0.9"/><line x1="122.1" y1="114.5" x2="-167.9" y2="-20.8" stroke="#b86000" stroke-opacity="0.40" stroke-width="0.9"/><line x1="123.0" y1="112.7" x2="-167.0" y2="-22.6" stroke="#70a010" stroke-opacity="0.40" stroke-width="0.9"/><line x1="117.8" y1="118.2" x2="-37.3" y2="-161.6" stroke="#70a010" stroke-opacity="0.40" stroke-width="0.9"/><line x1="119.6" y1="117.3" x2="-35.6" y2="-162.6" stroke="#b86000" stroke-opacity="0.40" stroke-width="0.9"/><line x1="121.3" y1="116.3" x2="-33.8" y2="-163.6" stroke="#98a828" stroke-opacity="0.95" stroke-width="0.9"/><line x1="123.0" y1="115.3" x2="-32.1" y2="-164.5" stroke="#b86000" stroke-opacity="0.40" stroke-width="0.9"/><line x1="124.8" y1="114.4" x2="-30.3" y2="-165.5" stroke="#70a010" stroke-opacity="0.40" stroke-width="0.9"/><line x1="117.3" y1="115.8" x2="156.3" y2="-201.8" stroke="#70a010" stroke-opacity="0.40" stroke-width="0.9"/><line x1="119.3" y1="116.1" x2="158.3" y2="-201.6" stroke="#b86000" stroke-opacity="0.40" stroke-width="0.9"/><line x1="121.3" y1="116.3" x2="160.3" y2="-201.3" stroke="#c0a018" stroke-opacity="0.95" stroke-width="0.9"/><line x1="123.3" y1="116.5" x2="162.3" y2="-201.1" stroke="#b86000" stroke-opacity="0.40" stroke-width="0.9"/><line x1="125.3" y1="116.8" x2="164.3" y2="-200.8" stroke="#70a010" stroke-opacity="0.40" stroke-width="0.9"/><line x1="118.4" y1="113.6" x2="336.6" y2="-120.5" stroke="#70a010" stroke-opacity="0.40" stroke-width="0.9"/><line x1="119.8" y1="114.9" x2="338.1" y2="-119.1" stroke="#b86000" stroke-opacity="0.40" stroke-width="0.9"/><line x1="121.3" y1="116.3" x2="339.5" y2="-117.7" stroke="#98a828" stroke-opacity="0.95" stroke-width="0.9"/><line x1="122.8" y1="117.7" x2="341.0" y2="-116.4" stroke="#b86000" stroke-opacity="0.40" stroke-width="0.9"/><line x1="124.2" y1="119.0" x2="342.5" y2="-115.0" stroke="#70a010" stroke-opacity="0.40" stroke-width="0.9"/><line x1="120.5" y1="112.4" x2="434.7" y2="51.3" stroke="#70a010" stroke-opacity="0.40" stroke-width="0.9"/><line x1="120.9" y1="114.3" x2="435.0" y2="53.3" stroke="#b86000" stroke-opacity="0.40" stroke-width="0.9"/><line x1="121.3" y1="116.3" x2="435.4" y2="55.2" stroke="#c0a018" stroke-opacity="0.95" stroke-width="0.9"/><line x1="121.7" y1="118.3" x2="435.8" y2="57.2" stroke="#b86000" stroke-opacity="0.40" stroke-width="0.9"/><line x1="122.1" y1="120.2" x2="436.2" y2="59.2" stroke="#70a010" stroke-opacity="0.40" stroke-width="0.9"/></g><line x1="121.3" y1="116.3" x2="153.4" y2="131.3" stroke="url(#g21)" stroke-width="1.54"/><line x1="121.3" y1="116.3" x2="138.5" y2="147.3" stroke="url(#g22)" stroke-width="1.54"/><line x1="121.3" y1="116.3" x2="117.0" y2="151.5" stroke="url(#g23)" stroke-width="1.54"/><line x1="121.3" y1="116.3" x2="97.1" y2="142.2" stroke="url(#g24)" stroke-width="1.54"/><line x1="121.3" y1="116.3" x2="86.5" y2="123.1" stroke="url(#g25)" stroke-width="1.54"/><line x1="121.3" y1="116.3" x2="89.2" y2="101.3" stroke="url(#g26)" stroke-width="1.54"/><line x1="121.3" y1="116.3" x2="104.1" y2="85.3" stroke="url(#g27)" stroke-width="1.54"/><line x1="121.3" y1="116.3" x2="125.6" y2="81.1" stroke="url(#g28)" stroke-width="1.54"/><line x1="121.3" y1="116.3" x2="145.5" y2="90.4" stroke="url(#g29)" stroke-width="1.54"/><line x1="121.3" y1="116.3" x2="156.1" y2="109.5" stroke="url(#g30)" stroke-width="1.54"/><g mask="url(#m3)" filter="url(#sb)"><line x1="106.0" y1="167.7" x2="414.1" y2="311.3" stroke="#70a010" stroke-opacity="0.42" stroke-width="0.9"/><line x1="105.1" y1="169.5" x2="413.3" y2="313.2" stroke="#b86000" stroke-opacity="0.42" stroke-width="0.9"/><line x1="104.3" y1="171.3" x2="412.4" y2="315.0" stroke="#70a010" stroke-opacity="0.42" stroke-width="0.9"/><line x1="103.4" y1="173.1" x2="411.6" y2="316.8" stroke="#b86000" stroke-opacity="0.42" stroke-width="0.9"/><line x1="102.6" y1="174.9" x2="410.7" y2="318.6" stroke="#70a010" stroke-opacity="0.42" stroke-width="0.9"/><line x1="101.7" y1="176.7" x2="409.9" y2="320.4" stroke="#b86000" stroke-opacity="0.42" stroke-width="0.9"/><line x1="100.9" y1="178.5" x2="409.0" y2="322.2" stroke="#70a010" stroke-opacity="0.42" stroke-width="0.9"/><line x1="100.0" y1="180.3" x2="408.2" y2="324.0" stroke="#b86000" stroke-opacity="0.42" stroke-width="0.9"/><line x1="109.1" y1="170.6" x2="274.0" y2="468.0" stroke="#70a010" stroke-opacity="0.42" stroke-width="0.9"/><line x1="107.4" y1="171.6" x2="272.2" y2="468.9" stroke="#b86000" stroke-opacity="0.42" stroke-width="0.9"/><line x1="105.6" y1="172.5" x2="270.5" y2="469.9" stroke="#70a010" stroke-opacity="0.42" stroke-width="0.9"/><line x1="103.9" y1="173.5" x2="268.7" y2="470.9" stroke="#b86000" stroke-opacity="0.42" stroke-width="0.9"/><line x1="102.1" y1="174.5" x2="267.0" y2="471.9" stroke="#70a010" stroke-opacity="0.42" stroke-width="0.9"/><line x1="100.4" y1="175.5" x2="265.2" y2="472.8" stroke="#b86000" stroke-opacity="0.42" stroke-width="0.9"/><line x1="98.6" y1="176.4" x2="263.5" y2="473.8" stroke="#70a010" stroke-opacity="0.42" stroke-width="0.9"/><line x1="96.9" y1="177.4" x2="261.7" y2="474.8" stroke="#b86000" stroke-opacity="0.42" stroke-width="0.9"/><line x1="109.9" y1="174.9" x2="68.5" y2="512.3" stroke="#70a010" stroke-opacity="0.42" stroke-width="0.9"/><line x1="108.0" y1="174.6" x2="66.5" y2="512.1" stroke="#b86000" stroke-opacity="0.42" stroke-width="0.9"/><line x1="106.0" y1="174.4" x2="64.5" y2="511.8" stroke="#70a010" stroke-opacity="0.42" stroke-width="0.9"/><line x1="104.0" y1="174.1" x2="62.6" y2="511.6" stroke="#b86000" stroke-opacity="0.42" stroke-width="0.9"/><line x1="102.0" y1="173.9" x2="60.6" y2="511.3" stroke="#70a010" stroke-opacity="0.42" stroke-width="0.9"/><line x1="100.0" y1="173.6" x2="58.6" y2="511.1" stroke="#b86000" stroke-opacity="0.42" stroke-width="0.9"/><line x1="98.0" y1="173.4" x2="56.6" y2="510.9" stroke="#70a010" stroke-opacity="0.42" stroke-width="0.9"/><line x1="96.1" y1="173.1" x2="54.6" y2="510.6" stroke="#b86000" stroke-opacity="0.42" stroke-width="0.9"/><line x1="108.1" y1="178.8" x2="-123.8" y2="427.4" stroke="#70a010" stroke-opacity="0.42" stroke-width="0.9"/><line x1="106.7" y1="177.4" x2="-125.2" y2="426.1" stroke="#b86000" stroke-opacity="0.42" stroke-width="0.9"/><line x1="105.2" y1="176.0" x2="-126.7" y2="424.7" stroke="#70a010" stroke-opacity="0.42" stroke-width="0.9"/><line x1="103.7" y1="174.7" x2="-128.1" y2="423.3" stroke="#b86000" stroke-opacity="0.42" stroke-width="0.9"/><line x1="102.3" y1="173.3" x2="-129.6" y2="422.0" stroke="#70a010" stroke-opacity="0.42" stroke-width="0.9"/><line x1="100.8" y1="172.0" x2="-131.1" y2="420.6" stroke="#b86000" stroke-opacity="0.42" stroke-width="0.9"/><line x1="99.3" y1="170.6" x2="-132.5" y2="419.3" stroke="#70a010" stroke-opacity="0.42" stroke-width="0.9"/><line x1="97.9" y1="169.2" x2="-134.0" y2="417.9" stroke="#b86000" stroke-opacity="0.42" stroke-width="0.9"/><line x1="104.3" y1="180.9" x2="-229.4" y2="245.7" stroke="#70a010" stroke-opacity="0.42" stroke-width="0.9"/><line x1="104.0" y1="178.9" x2="-229.8" y2="243.8" stroke="#b86000" stroke-opacity="0.42" stroke-width="0.9"/><line x1="103.6" y1="176.9" x2="-230.2" y2="241.8" stroke="#70a010" stroke-opacity="0.42" stroke-width="0.9"/><line x1="103.2" y1="175.0" x2="-230.6" y2="239.9" stroke="#b86000" stroke-opacity="0.42" stroke-width="0.9"/><line x1="102.8" y1="173.0" x2="-230.9" y2="237.9" stroke="#70a010" stroke-opacity="0.42" stroke-width="0.9"/><line x1="102.4" y1="171.1" x2="-231.3" y2="235.9" stroke="#b86000" stroke-opacity="0.42" stroke-width="0.9"/><line x1="102.0" y1="169.1" x2="-231.7" y2="234.0" stroke="#70a010" stroke-opacity="0.42" stroke-width="0.9"/><line x1="101.7" y1="167.1" x2="-232.1" y2="232.0" stroke="#b86000" stroke-opacity="0.42" stroke-width="0.9"/><line x1="100.0" y1="180.3" x2="-208.1" y2="36.7" stroke="#70a010" stroke-opacity="0.42" stroke-width="0.9"/><line x1="100.9" y1="178.5" x2="-207.3" y2="34.8" stroke="#b86000" stroke-opacity="0.42" stroke-width="0.9"/><line x1="101.7" y1="176.7" x2="-206.4" y2="33.0" stroke="#70a010" stroke-opacity="0.42" stroke-width="0.9"/><line x1="102.6" y1="174.9" x2="-205.6" y2="31.2" stroke="#b86000" stroke-opacity="0.42" stroke-width="0.9"/><line x1="103.4" y1="173.1" x2="-204.7" y2="29.4" stroke="#70a010" stroke-opacity="0.42" stroke-width="0.9"/><line x1="104.3" y1="171.3" x2="-203.9" y2="27.6" stroke="#b86000" stroke-opacity="0.42" stroke-width="0.9"/><line x1="105.1" y1="169.5" x2="-203.0" y2="25.8" stroke="#70a010" stroke-opacity="0.42" stroke-width="0.9"/><line x1="106.0" y1="167.7" x2="-202.2" y2="24.0" stroke="#b86000" stroke-opacity="0.42" stroke-width="0.9"/><line x1="96.9" y1="177.4" x2="-68.0" y2="-120.0" stroke="#70a010" stroke-opacity="0.42" stroke-width="0.9"/><line x1="98.6" y1="176.4" x2="-66.2" y2="-120.9" stroke="#b86000" stroke-opacity="0.42" stroke-width="0.9"/><line x1="100.4" y1="175.5" x2="-64.5" y2="-121.9" stroke="#70a010" stroke-opacity="0.42" stroke-width="0.9"/><line x1="102.1" y1="174.5" x2="-62.7" y2="-122.9" stroke="#b86000" stroke-opacity="0.42" stroke-width="0.9"/><line x1="103.9" y1="173.5" x2="-61.0" y2="-123.9" stroke="#70a010" stroke-opacity="0.42" stroke-width="0.9"/><line x1="105.6" y1="172.5" x2="-59.2" y2="-124.8" stroke="#b86000" stroke-opacity="0.42" stroke-width="0.9"/><line x1="107.4" y1="171.6" x2="-57.5" y2="-125.8" stroke="#70a010" stroke-opacity="0.42" stroke-width="0.9"/><line x1="109.1" y1="170.6" x2="-55.7" y2="-126.8" stroke="#b86000" stroke-opacity="0.42" stroke-width="0.9"/><line x1="96.1" y1="173.1" x2="137.5" y2="-164.3" stroke="#70a010" stroke-opacity="0.42" stroke-width="0.9"/><line x1="98.0" y1="173.4" x2="139.5" y2="-164.1" stroke="#b86000" stroke-opacity="0.42" stroke-width="0.9"/><line x1="100.0" y1="173.6" x2="141.5" y2="-163.8" stroke="#70a010" stroke-opacity="0.42" stroke-width="0.9"/><line x1="102.0" y1="173.9" x2="143.4" y2="-163.6" stroke="#b86000" stroke-opacity="0.42" stroke-width="0.9"/><line x1="104.0" y1="174.1" x2="145.4" y2="-163.3" stroke="#70a010" stroke-opacity="0.42" stroke-width="0.9"/><line x1="106.0" y1="174.4" x2="147.4" y2="-163.1" stroke="#b86000" stroke-opacity="0.42" stroke-width="0.9"/><line x1="108.0" y1="174.6" x2="149.4" y2="-162.9" stroke="#70a010" stroke-opacity="0.42" stroke-width="0.9"/><line x1="109.9" y1="174.9" x2="151.4" y2="-162.6" stroke="#b86000" stroke-opacity="0.42" stroke-width="0.9"/><line x1="97.9" y1="169.2" x2="329.8" y2="-79.4" stroke="#70a010" stroke-opacity="0.42" stroke-width="0.9"/><line x1="99.3" y1="170.6" x2="331.2" y2="-78.1" stroke="#b86000" stroke-opacity="0.42" stroke-width="0.9"/><line x1="100.8" y1="172.0" x2="332.7" y2="-76.7" stroke="#70a010" stroke-opacity="0.42" stroke-width="0.9"/><line x1="102.3" y1="173.3" x2="334.1" y2="-75.3" stroke="#b86000" stroke-opacity="0.42" stroke-width="0.9"/><line x1="103.7" y1="174.7" x2="335.6" y2="-74.0" stroke="#70a010" stroke-opacity="0.42" stroke-width="0.9"/><line x1="105.2" y1="176.0" x2="337.1" y2="-72.6" stroke="#b86000" stroke-opacity="0.42" stroke-width="0.9"/><line x1="106.7" y1="177.4" x2="338.5" y2="-71.3" stroke="#70a010" stroke-opacity="0.42" stroke-width="0.9"/><line x1="108.1" y1="178.8" x2="340.0" y2="-69.9" stroke="#b86000" stroke-opacity="0.42" stroke-width="0.9"/><line x1="101.7" y1="167.1" x2="435.4" y2="102.3" stroke="#70a010" stroke-opacity="0.42" stroke-width="0.9"/><line x1="102.0" y1="169.1" x2="435.8" y2="104.2" stroke="#b86000" stroke-opacity="0.42" stroke-width="0.9"/><line x1="102.4" y1="171.1" x2="436.2" y2="106.2" stroke="#70a010" stroke-opacity="0.42" stroke-width="0.9"/><line x1="102.8" y1="173.0" x2="436.6" y2="108.1" stroke="#b86000" stroke-opacity="0.42" stroke-width="0.9"/><line x1="103.2" y1="175.0" x2="436.9" y2="110.1" stroke="#70a010" stroke-opacity="0.42" stroke-width="0.9"/><line x1="103.6" y1="176.9" x2="437.3" y2="112.1" stroke="#b86000" stroke-opacity="0.42" stroke-width="0.9"/><line x1="104.0" y1="178.9" x2="437.7" y2="114.0" stroke="#70a010" stroke-opacity="0.42" stroke-width="0.9"/><line x1="104.3" y1="180.9" x2="438.1" y2="116.0" stroke="#b86000" stroke-opacity="0.42" stroke-width="0.9"/></g><line x1="103.0" y1="174.0" x2="147.6" y2="194.8" stroke="url(#g31)" stroke-width="1.88"/><line x1="103.0" y1="174.0" x2="126.9" y2="217.0" stroke="url(#g32)" stroke-width="1.88"/><line x1="103.0" y1="174.0" x2="97.0" y2="222.8" stroke="url(#g33)" stroke-width="1.88"/><line x1="103.0" y1="174.0" x2="69.4" y2="210.0" stroke="url(#g34)" stroke-width="1.88"/><line x1="103.0" y1="174.0" x2="54.7" y2="183.4" stroke="url(#g35)" stroke-width="1.88"/><line x1="103.0" y1="174.0" x2="58.4" y2="153.2" stroke="url(#g36)" stroke-width="1.88"/><line x1="103.0" y1="174.0" x2="79.1" y2="131.0" stroke="url(#g37)" stroke-width="1.88"/><line x1="103.0" y1="174.0" x2="109.0" y2="125.2" stroke="url(#g38)" stroke-width="1.88"/><line x1="103.0" y1="174.0" x2="136.6" y2="138.0" stroke="url(#g39)" stroke-width="1.88"/><line x1="103.0" y1="174.0" x2="151.3" y2="164.6" stroke="url(#g40)" stroke-width="1.88"/><g mask="url(#m4)" filter="url(#sb)"><line x1="97.1" y1="191.3" x2="369.0" y2="318.1" stroke="#70a010" stroke-opacity="0.36" stroke-width="0.9"/><line x1="96.2" y1="193.1" x2="368.1" y2="319.9" stroke="#b86000" stroke-opacity="0.36" stroke-width="0.9"/><line x1="95.4" y1="194.9" x2="367.3" y2="321.7" stroke="#70a010" stroke-opacity="0.36" stroke-width="0.9"/><line x1="94.5" y1="196.7" x2="366.4" y2="323.5" stroke="#b86000" stroke-opacity="0.36" stroke-width="0.9"/><line x1="98.4" y1="192.5" x2="243.9" y2="454.9" stroke="#70a010" stroke-opacity="0.36" stroke-width="0.9"/><line x1="96.7" y1="193.5" x2="242.1" y2="455.9" stroke="#b86000" stroke-opacity="0.36" stroke-width="0.9"/><line x1="94.9" y1="194.5" x2="240.4" y2="456.9" stroke="#70a010" stroke-opacity="0.36" stroke-width="0.9"/><line x1="93.2" y1="195.5" x2="238.6" y2="457.8" stroke="#b86000" stroke-opacity="0.36" stroke-width="0.9"/><line x1="98.8" y1="194.4" x2="62.2" y2="492.1" stroke="#70a010" stroke-opacity="0.36" stroke-width="0.9"/><line x1="96.8" y1="194.1" x2="60.2" y2="491.9" stroke="#b86000" stroke-opacity="0.36" stroke-width="0.9"/><line x1="94.8" y1="193.9" x2="58.2" y2="491.6" stroke="#70a010" stroke-opacity="0.36" stroke-width="0.9"/><line x1="92.8" y1="193.6" x2="56.3" y2="491.4" stroke="#b86000" stroke-opacity="0.36" stroke-width="0.9"/><line x1="98.0" y1="196.0" x2="-106.6" y2="415.5" stroke="#70a010" stroke-opacity="0.36" stroke-width="0.9"/><line x1="96.5" y1="194.7" x2="-108.1" y2="414.1" stroke="#b86000" stroke-opacity="0.36" stroke-width="0.9"/><line x1="95.1" y1="193.3" x2="-109.5" y2="412.7" stroke="#70a010" stroke-opacity="0.36" stroke-width="0.9"/><line x1="93.6" y1="192.0" x2="-111.0" y2="411.4" stroke="#b86000" stroke-opacity="0.36" stroke-width="0.9"/><line x1="96.4" y1="196.9" x2="-198.1" y2="254.2" stroke="#70a010" stroke-opacity="0.36" stroke-width="0.9"/><line x1="96.0" y1="195.0" x2="-198.5" y2="252.2" stroke="#b86000" stroke-opacity="0.36" stroke-width="0.9"/><line x1="95.6" y1="193.0" x2="-198.9" y2="250.3" stroke="#70a010" stroke-opacity="0.36" stroke-width="0.9"/><line x1="95.2" y1="191.1" x2="-199.3" y2="248.3" stroke="#b86000" stroke-opacity="0.36" stroke-width="0.9"/><line x1="94.5" y1="196.7" x2="-177.4" y2="69.9" stroke="#70a010" stroke-opacity="0.36" stroke-width="0.9"/><line x1="95.4" y1="194.9" x2="-176.5" y2="68.1" stroke="#b86000" stroke-opacity="0.36" stroke-width="0.9"/><line x1="96.2" y1="193.1" x2="-175.7" y2="66.3" stroke="#70a010" stroke-opacity="0.36" stroke-width="0.9"/><line x1="97.1" y1="191.3" x2="-174.8" y2="64.5" stroke="#b86000" stroke-opacity="0.36" stroke-width="0.9"/><line x1="93.2" y1="195.5" x2="-52.3" y2="-66.9" stroke="#70a010" stroke-opacity="0.36" stroke-width="0.9"/><line x1="94.9" y1="194.5" x2="-50.5" y2="-67.9" stroke="#b86000" stroke-opacity="0.36" stroke-width="0.9"/><line x1="96.7" y1="193.5" x2="-48.8" y2="-68.9" stroke="#70a010" stroke-opacity="0.36" stroke-width="0.9"/><line x1="98.4" y1="192.5" x2="-47.0" y2="-69.8" stroke="#b86000" stroke-opacity="0.36" stroke-width="0.9"/><line x1="92.8" y1="193.6" x2="129.4" y2="-104.1" stroke="#70a010" stroke-opacity="0.36" stroke-width="0.9"/><line x1="94.8" y1="193.9" x2="131.4" y2="-103.9" stroke="#b86000" stroke-opacity="0.36" stroke-width="0.9"/><line x1="96.8" y1="194.1" x2="133.4" y2="-103.6" stroke="#70a010" stroke-opacity="0.36" stroke-width="0.9"/><line x1="98.8" y1="194.4" x2="135.3" y2="-103.4" stroke="#b86000" stroke-opacity="0.36" stroke-width="0.9"/><line x1="93.6" y1="192.0" x2="298.2" y2="-27.5" stroke="#70a010" stroke-opacity="0.36" stroke-width="0.9"/><line x1="95.1" y1="193.3" x2="299.7" y2="-26.1" stroke="#b86000" stroke-opacity="0.36" stroke-width="0.9"/><line x1="96.5" y1="194.7" x2="301.1" y2="-24.7" stroke="#70a010" stroke-opacity="0.36" stroke-width="0.9"/><line x1="98.0" y1="196.0" x2="302.6" y2="-23.4" stroke="#b86000" stroke-opacity="0.36" stroke-width="0.9"/><line x1="95.2" y1="191.1" x2="389.7" y2="133.8" stroke="#70a010" stroke-opacity="0.36" stroke-width="0.9"/><line x1="95.6" y1="193.0" x2="390.1" y2="135.8" stroke="#b86000" stroke-opacity="0.36" stroke-width="0.9"/><line x1="96.0" y1="195.0" x2="390.5" y2="137.7" stroke="#70a010" stroke-opacity="0.36" stroke-width="0.9"/><line x1="96.4" y1="196.9" x2="390.9" y2="139.7" stroke="#b86000" stroke-opacity="0.36" stroke-width="0.9"/></g><line x1="95.8" y1="194.0" x2="124.4" y2="207.4" stroke="url(#g41)" stroke-width="1.44"/><line x1="95.8" y1="194.0" x2="111.1" y2="221.6" stroke="url(#g42)" stroke-width="1.44"/><line x1="95.8" y1="194.0" x2="91.9" y2="225.4" stroke="url(#g43)" stroke-width="1.44"/><line x1="95.8" y1="194.0" x2="74.2" y2="217.1" stroke="url(#g44)" stroke-width="1.44"/><line x1="95.8" y1="194.0" x2="64.8" y2="200.0" stroke="url(#g45)" stroke-width="1.44"/><line x1="95.8" y1="194.0" x2="67.2" y2="180.6" stroke="url(#g46)" stroke-width="1.44"/><line x1="95.8" y1="194.0" x2="80.5" y2="166.4" stroke="url(#g47)" stroke-width="1.44"/><line x1="95.8" y1="194.0" x2="99.7" y2="162.6" stroke="url(#g48)" stroke-width="1.44"/><line x1="95.8" y1="194.0" x2="117.4" y2="170.9" stroke="url(#g49)" stroke-width="1.44"/><line x1="95.8" y1="194.0" x2="126.8" y2="188.0" stroke="url(#g50)" stroke-width="1.44"/><g mask="url(#m5)" filter="url(#sb)"><line x1="212.0" y1="132.0" x2="502.0" y2="267.2" stroke="#98a828" stroke-opacity="0.90" stroke-width="0.9"/><line x1="212.0" y1="132.0" x2="367.1" y2="411.9" stroke="#c0a018" stroke-opacity="0.90" stroke-width="0.9"/><line x1="212.0" y1="132.0" x2="173.0" y2="449.6" stroke="#98a828" stroke-opacity="0.90" stroke-width="0.9"/><line x1="212.0" y1="132.0" x2="-6.2" y2="366.0" stroke="#c0a018" stroke-opacity="0.90" stroke-width="0.9"/><line x1="212.0" y1="132.0" x2="-102.1" y2="193.1" stroke="#98a828" stroke-opacity="0.90" stroke-width="0.9"/><line x1="212.0" y1="132.0" x2="-78.0" y2="-3.2" stroke="#c0a018" stroke-opacity="0.90" stroke-width="0.9"/><line x1="212.0" y1="132.0" x2="56.9" y2="-147.9" stroke="#98a828" stroke-opacity="0.90" stroke-width="0.9"/><line x1="212.0" y1="132.0" x2="251.0" y2="-185.6" stroke="#c0a018" stroke-opacity="0.90" stroke-width="0.9"/><line x1="212.0" y1="132.0" x2="430.2" y2="-102.0" stroke="#98a828" stroke-opacity="0.90" stroke-width="0.9"/><line x1="212.0" y1="132.0" x2="526.1" y2="70.9" stroke="#c0a018" stroke-opacity="0.90" stroke-width="0.9"/></g><line x1="212.0" y1="132.0" x2="242.1" y2="146.0" stroke="url(#g51)" stroke-width="1.48"/><line x1="212.0" y1="132.0" x2="228.1" y2="161.0" stroke="url(#g52)" stroke-width="1.48"/><line x1="212.0" y1="132.0" x2="208.0" y2="165.0" stroke="url(#g53)" stroke-width="1.48"/><line x1="212.0" y1="132.0" x2="189.4" y2="156.3" stroke="url(#g54)" stroke-width="1.48"/><line x1="212.0" y1="132.0" x2="179.4" y2="138.3" stroke="url(#g55)" stroke-width="1.48"/><line x1="212.0" y1="132.0" x2="181.9" y2="118.0" stroke="url(#g56)" stroke-width="1.48"/><line x1="212.0" y1="132.0" x2="195.9" y2="103.0" stroke="url(#g57)" stroke-width="1.48"/><line x1="212.0" y1="132.0" x2="216.0" y2="99.0" stroke="url(#g58)" stroke-width="1.48"/><line x1="212.0" y1="132.0" x2="234.6" y2="107.7" stroke="url(#g59)" stroke-width="1.48"/><line x1="212.0" y1="132.0" x2="244.6" y2="125.7" stroke="url(#g60)" stroke-width="1.48"/><g mask="url(#m6)" filter="url(#sb)"><line x1="235.0" y1="125.0" x2="506.9" y2="251.8" stroke="#98a828" stroke-opacity="0.85" stroke-width="0.9"/><line x1="235.0" y1="125.0" x2="380.4" y2="387.4" stroke="#c0a018" stroke-opacity="0.85" stroke-width="0.9"/><line x1="235.0" y1="125.0" x2="198.4" y2="422.8" stroke="#98a828" stroke-opacity="0.85" stroke-width="0.9"/><line x1="235.0" y1="125.0" x2="30.4" y2="344.4" stroke="#c0a018" stroke-opacity="0.85" stroke-width="0.9"/><line x1="235.0" y1="125.0" x2="-59.5" y2="182.2" stroke="#98a828" stroke-opacity="0.85" stroke-width="0.9"/><line x1="235.0" y1="125.0" x2="-36.9" y2="-1.8" stroke="#c0a018" stroke-opacity="0.85" stroke-width="0.9"/><line x1="235.0" y1="125.0" x2="89.6" y2="-137.4" stroke="#98a828" stroke-opacity="0.85" stroke-width="0.9"/><line x1="235.0" y1="125.0" x2="271.6" y2="-172.8" stroke="#c0a018" stroke-opacity="0.85" stroke-width="0.9"/><line x1="235.0" y1="125.0" x2="439.6" y2="-94.4" stroke="#98a828" stroke-opacity="0.85" stroke-width="0.9"/><line x1="235.0" y1="125.0" x2="529.5" y2="67.8" stroke="#c0a018" stroke-opacity="0.85" stroke-width="0.9"/></g><line x1="235.0" y1="125.0" x2="263.6" y2="138.4" stroke="url(#g61)" stroke-width="1.44"/><line x1="235.0" y1="125.0" x2="250.3" y2="152.6" stroke="url(#g62)" stroke-width="1.44"/><line x1="235.0" y1="125.0" x2="231.1" y2="156.4" stroke="url(#g63)" stroke-width="1.44"/><line x1="235.0" y1="125.0" x2="213.4" y2="148.1" stroke="url(#g64)" stroke-width="1.44"/><line x1="235.0" y1="125.0" x2="204.0" y2="131.0" stroke="url(#g65)" stroke-width="1.44"/><line x1="235.0" y1="125.0" x2="206.4" y2="111.6" stroke="url(#g66)" stroke-width="1.44"/><line x1="235.0" y1="125.0" x2="219.7" y2="97.4" stroke="url(#g67)" stroke-width="1.44"/><line x1="235.0" y1="125.0" x2="238.9" y2="93.6" stroke="url(#g68)" stroke-width="1.44"/><line x1="235.0" y1="125.0" x2="256.6" y2="101.9" stroke="url(#g69)" stroke-width="1.44"/><line x1="235.0" y1="125.0" x2="266.0" y2="119.0" stroke="url(#g70)" stroke-width="1.44"/><g mask="url(#m7)" filter="url(#sb)"><line x1="200.4" y1="232.0" x2="490.4" y2="367.2" stroke="#98a828" stroke-opacity="0.90" stroke-width="0.9"/><line x1="200.4" y1="232.0" x2="355.5" y2="511.9" stroke="#c0a018" stroke-opacity="0.90" stroke-width="0.9"/><line x1="200.4" y1="232.0" x2="161.4" y2="549.6" stroke="#98a828" stroke-opacity="0.90" stroke-width="0.9"/><line x1="200.4" y1="232.0" x2="-17.8" y2="466.0" stroke="#c0a018" stroke-opacity="0.90" stroke-width="0.9"/><line x1="200.4" y1="232.0" x2="-113.7" y2="293.1" stroke="#98a828" stroke-opacity="0.90" stroke-width="0.9"/><line x1="200.4" y1="232.0" x2="-89.6" y2="96.8" stroke="#c0a018" stroke-opacity="0.90" stroke-width="0.9"/><line x1="200.4" y1="232.0" x2="45.3" y2="-47.9" stroke="#98a828" stroke-opacity="0.90" stroke-width="0.9"/><line x1="200.4" y1="232.0" x2="239.4" y2="-85.6" stroke="#c0a018" stroke-opacity="0.90" stroke-width="0.9"/><line x1="200.4" y1="232.0" x2="418.6" y2="-2.0" stroke="#98a828" stroke-opacity="0.90" stroke-width="0.9"/><line x1="200.4" y1="232.0" x2="514.5" y2="170.9" stroke="#c0a018" stroke-opacity="0.90" stroke-width="0.9"/></g><line x1="200.4" y1="232.0" x2="230.5" y2="246.0" stroke="url(#g71)" stroke-width="1.48"/><line x1="200.4" y1="232.0" x2="216.5" y2="261.0" stroke="url(#g72)" stroke-width="1.48"/><line x1="200.4" y1="232.0" x2="196.4" y2="265.0" stroke="url(#g73)" stroke-width="1.48"/><line x1="200.4" y1="232.0" x2="177.8" y2="256.3" stroke="url(#g74)" stroke-width="1.48"/><line x1="200.4" y1="232.0" x2="167.8" y2="238.3" stroke="url(#g75)" stroke-width="1.48"/><line x1="200.4" y1="232.0" x2="170.3" y2="218.0" stroke="url(#g76)" stroke-width="1.48"/><line x1="200.4" y1="232.0" x2="184.3" y2="203.0" stroke="url(#g77)" stroke-width="1.48"/><line x1="200.4" y1="232.0" x2="204.4" y2="199.0" stroke="url(#g78)" stroke-width="1.48"/><line x1="200.4" y1="232.0" x2="223.0" y2="207.7" stroke="url(#g79)" stroke-width="1.48"/><line x1="200.4" y1="232.0" x2="233.0" y2="225.7" stroke="url(#g80)" stroke-width="1.48"/><circle cx="44.5" cy="123.0" r="9.0" fill="url(#core)"/><circle cx="127.5" cy="94.0" r="10.5" fill="url(#core)"/><circle cx="121.3" cy="116.3" r="12.6" fill="url(#core)"/><circle cx="103.0" cy="174.0" r="25.5" fill="url(#core)"/><circle cx="95.8" cy="194.0" r="9.0" fill="url(#core)"/><circle cx="212.0" cy="132.0" r="10.5" fill="url(#core)"/><circle cx="235.0" cy="125.0" r="9.0" fill="url(#core)"/><circle cx="200.4" cy="232.0" r="10.5" fill="url(#core)"/></svg></div><!--/stars-->
<div class="a" style="left:326px;top:26px;width:1px;height:507px;background:#303030"></div>
<!-- vscroll -->
<div class="a" style="left:327px;top:26px;width:14px;height:507px;background:#ebe9e4"></div>
<div class="sb up" style="left:327px;top:26px;width:14px;height:13px"></div>
<div class="sb dn" style="left:328px;top:521px;width:13px;height:12px"></div>
<!-- bottom bar -->
<div class="a" style="left:38px;top:534px;width:304px;height:14px;background:#d4d0c8"></div>
<div class="btn" style="left:41px;top:536px;width:8px;height:8px"></div>
<div class="a" style="left:43px;top:539px;width:4px;height:1px;background:#000"></div>
<div class="btn" style="left:52px;top:536px;width:9px;height:8px"></div>
<div class="a" style="left:54px;top:539px;width:5px;height:1px;background:#000"></div>
<div class="a" style="left:56px;top:537px;width:1px;height:5px;background:#000"></div>
<div class="a" style="left:65px;top:534px;width:50px;height:12px;background:#fff;border-left:1px solid #808080"></div>
<div class="t" style="left:67.5px;top:536px;font-size:10px;line-height:11px">90.25%</div>
<div class="ddb" style="left:115px;top:534px;width:13px;height:11px"></div>
<div class="a" style="left:129px;top:534px;width:1px;height:12px;background:#a0a0a0"></div>
<div class="a" style="left:130px;top:534px;width:68px;height:12px;background:#d4d0c8"></div>
<div class="a" style="left:211px;top:534px;width:104px;height:12px;background:#ebe9e4"></div>
<div class="sb lf" style="left:198px;top:534px;width:13px;height:12px"></div>
<div class="sb rt" style="left:315px;top:534px;width:12px;height:12px"></div>

<!-- logo -->
<div class="a" style="left:36px;top:555px;width:162px;height:18px;border:1px solid #404040;box-shadow:inset 1px 1px 0 #fff, inset -1px -1px 0 #808080;background:#e6e4de"></div>
<div class="t" style="left:52px;top:556px;font-size:13.2px;line-height:15px;font-weight:bold;color:#1818e0;text-shadow:1px 1.5px 1.5px #707070;letter-spacing:0.6px"><i>ProDigital</i> Software</div>

<!-- checkboxes -->
<div class="a" style="left:223px;top:559px;width:10px;height:10px;background:#fff;border-top:1px solid #808080;border-left:1px solid #808080;border-right:1px solid #fff;border-bottom:1px solid #fff;box-shadow:inset 1px 1px 0 #404040"></div>
<svg class="a" style="left:224px;top:560px" width="8" height="8"><path d="M1 3.3 L3 5.6 L7 1.3" stroke="#000" stroke-width="1.8" fill="none"/></svg>
<div class="t" style="left:237px;top:560px">Effects <u>O</u>nly</div>
<div class="a" style="left:301px;top:559px;width:10px;height:10px;background:#fff;border-top:1px solid #808080;border-left:1px solid #808080;border-right:1px solid #fff;border-bottom:1px solid #fff;box-shadow:inset 1px 1px 0 #404040"></div>
<svg class="a" style="left:302px;top:560px" width="8" height="8"><path d="M1 3.3 L3 5.6 L7 1.3" stroke="#000" stroke-width="1.8" fill="none"/></svg>
<div class="t" style="left:315px;top:560px"><u>P</u>review</div>

<div class="btn" style="left:365px;top:555px;width:53px;height:18px;line-height:16px">Configure</div>
<div class="btn" style="left:442px;top:555px;width:129px;height:18px;line-height:16px">Buy / Activate This Software</div>

<!-- size grip -->
<svg class="a" style="left:584px;top:566px" width="14" height="14" viewBox="0 0 14 14">
<path d="M13 1 L1 13 M13 4 L4 13 M13 7 L7 13 M13 10 L10 13" stroke="#6a6a6a" stroke-width="1.1"/>
<path d="M13 2.2 L2.2 13 M13 5.2 L5.2 13 M13 8.2 L8.2 13 M13 11.2 L11.2 13" stroke="#fff" stroke-width="0.7"/>
</svg>

<!-- right top -->
<div id="thumb" class="a" style="left:351px;top:26px;width:82px;height:45px;background:#000"><svg width="82" height="45" viewBox="0 0 82 45" style="display:block"><defs><radialGradient id="gB" cx="0.45" cy="0.4"><stop offset="0" stop-color="#c0e0ff"/><stop offset="0.4" stop-color="#3070ff"/><stop offset="0.8" stop-color="#1030c0"/><stop offset="1" stop-color="#000830" stop-opacity="0.4"/></radialGradient><radialGradient id="gR" cx="0.5" cy="0.55"><stop offset="0" stop-color="#ff70a0"/><stop offset="0.55" stop-color="#c01040"/><stop offset="0.85" stop-color="#e02050"/><stop offset="1" stop-color="#400010" stop-opacity="0.3"/></radialGradient><radialGradient id="cG"><stop offset="0" stop-color="#fff"/><stop offset="0.3" stop-color="#b0ffd8"/><stop offset="1" stop-color="#40c080" stop-opacity="0"/></radialGradient><radialGradient id="cB"><stop offset="0" stop-color="#fff"/><stop offset="0.3" stop-color="#80e8ff"/><stop offset="1" stop-color="#2080ff" stop-opacity="0"/></radialGradient><radialGradient id="cR"><stop offset="0" stop-color="#fff"/><stop offset="0.3" stop-color="#ffd0e8"/><stop offset="1" stop-color="#ff4080" stop-opacity="0"/></radialGradient></defs><rect width="82" height="45" fill="#000"/><line x1="17.2" y1="27.7" x2="77.8" y2="62.7" stroke="#30a070" stroke-width="0.6" stroke-opacity="0.4"/><line x1="17.2" y1="27.7" x2="35.3" y2="95.3" stroke="#30a070" stroke-width="0.6" stroke-opacity="0.4"/><line x1="17.2" y1="27.7" x2="-17.8" y2="88.3" stroke="#30a070" stroke-width="0.6" stroke-opacity="0.4"/><line x1="17.2" y1="27.7" x2="-50.4" y2="45.8" stroke="#30a070" stroke-width="0.6" stroke-opacity="0.4"/><line x1="17.2" y1="27.7" x2="-43.4" y2="-7.3" stroke="#30a070" stroke-width="0.6" stroke-opacity="0.4"/><line x1="17.2" y1="27.7" x2="-0.9" y2="-39.9" stroke="#30a070" stroke-width="0.6" stroke-opacity="0.4"/><line x1="17.2" y1="27.7" x2="52.2" y2="-32.9" stroke="#30a070" stroke-width="0.6" stroke-opacity="0.4"/><line x1="17.2" y1="27.7" x2="84.8" y2="9.6" stroke="#30a070" stroke-width="0.6" stroke-opacity="0.4"/><line x1="48.0" y1="33.7" x2="108.6" y2="68.7" stroke="#3050e0" stroke-width="0.6" stroke-opacity="0.4"/><line x1="48.0" y1="33.7" x2="66.1" y2="101.3" stroke="#3050e0" stroke-width="0.6" stroke-opacity="0.4"/><line x1="48.0" y1="33.7" x2="13.0" y2="94.3" stroke="#3050e0" stroke-width="0.6" stroke-opacity="0.4"/><line x1="48.0" y1="33.7" x2="-19.6" y2="51.8" stroke="#3050e0" stroke-width="0.6" stroke-opacity="0.4"/><line x1="48.0" y1="33.7" x2="-12.6" y2="-1.3" stroke="#3050e0" stroke-width="0.6" stroke-opacity="0.4"/><line x1="48.0" y1="33.7" x2="29.9" y2="-33.9" stroke="#3050e0" stroke-width="0.6" stroke-opacity="0.4"/><line x1="48.0" y1="33.7" x2="83.0" y2="-26.9" stroke="#3050e0" stroke-width="0.6" stroke-opacity="0.4"/><line x1="48.0" y1="33.7" x2="115.6" y2="15.6" stroke="#3050e0" stroke-width="0.6" stroke-opacity="0.4"/><line x1="61.5" y1="11.2" x2="122.1" y2="46.2" stroke="#d04070" stroke-width="0.6" stroke-opacity="0.4"/><line x1="61.5" y1="11.2" x2="79.6" y2="78.8" stroke="#d04070" stroke-width="0.6" stroke-opacity="0.4"/><line x1="61.5" y1="11.2" x2="26.5" y2="71.8" stroke="#d04070" stroke-width="0.6" stroke-opacity="0.4"/><line x1="61.5" y1="11.2" x2="-6.1" y2="29.3" stroke="#d04070" stroke-width="0.6" stroke-opacity="0.4"/><line x1="61.5" y1="11.2" x2="0.9" y2="-23.8" stroke="#d04070" stroke-width="0.6" stroke-opacity="0.4"/><line x1="61.5" y1="11.2" x2="43.4" y2="-56.4" stroke="#d04070" stroke-width="0.6" stroke-opacity="0.4"/><line x1="61.5" y1="11.2" x2="96.5" y2="-49.4" stroke="#d04070" stroke-width="0.6" stroke-opacity="0.4"/><line x1="61.5" y1="11.2" x2="129.1" y2="-6.9" stroke="#d04070" stroke-width="0.6" stroke-opacity="0.4"/><path d="M13 22 L18 14 L34 13 L39 19 L35 27 L20 29 Z" fill="#003018" stroke="#30e090" stroke-width="2.2" stroke-opacity="0.9"/><path d="M19 19 L24 16 L31 16" stroke="#a0ffd0" stroke-width="1" fill="none"/><circle cx="42" cy="28.5" r="10" fill="url(#gB)"/><path d="M34 25 L40 20 L48 23 L47 31 L38 33 Z" fill="#c8e0ff" fill-opacity="0.5" stroke="#ffffff" stroke-opacity="0.6" stroke-width="0.8"/><circle cx="63" cy="20" r="9.5" fill="#6a0820" stroke="#e82858" stroke-width="2"/><circle cx="66" cy="25" r="3.5" fill="#ff70a8" fill-opacity="0.85"/><circle cx="58" cy="22" r="2.5" fill="#d03060" fill-opacity="0.8"/><circle cx="17.2" cy="27.7" r="8" fill="url(#cG)"/><line x1="17.2" y1="27.7" x2="32.8" y2="36.7" stroke="#d0ffe8" stroke-width="1.0" stroke-opacity="0.85"/><line x1="17.2" y1="27.7" x2="19.8" y2="37.3" stroke="#d0ffe8" stroke-width="1.0" stroke-opacity="0.85"/><line x1="17.2" y1="27.7" x2="8.2" y2="43.3" stroke="#d0ffe8" stroke-width="1.0" stroke-opacity="0.85"/><line x1="17.2" y1="27.7" x2="7.6" y2="30.3" stroke="#d0ffe8" stroke-width="1.0" stroke-opacity="0.85"/><line x1="17.2" y1="27.7" x2="1.6" y2="18.7" stroke="#d0ffe8" stroke-width="1.0" stroke-opacity="0.85"/><line x1="17.2" y1="27.7" x2="14.6" y2="18.1" stroke="#d0ffe8" stroke-width="1.0" stroke-opacity="0.85"/><line x1="17.2" y1="27.7" x2="26.2" y2="12.1" stroke="#d0ffe8" stroke-width="1.0" stroke-opacity="0.85"/><line x1="17.2" y1="27.7" x2="26.8" y2="25.1" stroke="#d0ffe8" stroke-width="1.0" stroke-opacity="0.85"/><circle cx="48.0" cy="33.7" r="7" fill="url(#cB)"/><line x1="48.0" y1="33.7" x2="60.1" y2="40.7" stroke="#a0f0ff" stroke-width="0.9" stroke-opacity="0.8"/><line x1="48.0" y1="33.7" x2="50.0" y2="41.1" stroke="#a0f0ff" stroke-width="0.9" stroke-opacity="0.8"/><line x1="48.0" y1="33.7" x2="41.0" y2="45.8" stroke="#a0f0ff" stroke-width="0.9" stroke-opacity="0.8"/><line x1="48.0" y1="33.7" x2="40.6" y2="35.7" stroke="#a0f0ff" stroke-width="0.9" stroke-opacity="0.8"/><line x1="48.0" y1="33.7" x2="35.9" y2="26.7" stroke="#a0f0ff" stroke-width="0.9" stroke-opacity="0.8"/><line x1="48.0" y1="33.7" x2="46.0" y2="26.3" stroke="#a0f0ff" stroke-width="0.9" stroke-opacity="0.8"/><line x1="48.0" y1="33.7" x2="55.0" y2="21.6" stroke="#a0f0ff" stroke-width="0.9" stroke-opacity="0.8"/><line x1="48.0" y1="33.7" x2="55.4" y2="31.7" stroke="#a0f0ff" stroke-width="0.9" stroke-opacity="0.8"/><circle cx="61.5" cy="11.2" r="8" fill="url(#cR)"/><line x1="61.5" y1="11.2" x2="77.1" y2="20.2" stroke="#ffe0f0" stroke-width="1.0" stroke-opacity="0.85"/><line x1="61.5" y1="11.2" x2="64.1" y2="20.8" stroke="#ffe0f0" stroke-width="1.0" stroke-opacity="0.85"/><line x1="61.5" y1="11.2" x2="52.5" y2="26.8" stroke="#ffe0f0" stroke-width="1.0" stroke-opacity="0.85"/><line x1="61.5" y1="11.2" x2="51.9" y2="13.8" stroke="#ffe0f0" stroke-width="1.0" stroke-opacity="0.85"/><line x1="61.5" y1="11.2" x2="45.9" y2="2.2" stroke="#ffe0f0" stroke-width="1.0" stroke-opacity="0.85"/><line x1="61.5" y1="11.2" x2="58.9" y2="1.6" stroke="#ffe0f0" stroke-width="1.0" stroke-opacity="0.85"/><line x1="61.5" y1="11.2" x2="70.5" y2="-4.4" stroke="#ffe0f0" stroke-width="1.0" stroke-opacity="0.85"/><line x1="61.5" y1="11.2" x2="71.1" y2="8.6" stroke="#ffe0f0" stroke-width="1.0" stroke-opacity="0.85"/></svg></div><!--/thumb-->
<div class="a" style="left:472px;top:26px;width:83px;height:19px;border:1px solid #000"></div>
<div class="btn" style="left:473px;top:27px;width:81px;height:17px;line-height:15px;font-size:9.2px">OK</div>
<div class="btn" style="left:472px;top:53px;width:83px;height:19px;line-height:17px;font-size:9.2px">Cancel</div>
<svg class="a" style="left:565px;top:24px" width="26" height="26" viewBox="0 0 26 26">
<circle cx="13" cy="13" r="11.6" fill="#e8e8f0" stroke="#2860c0" stroke-width="1.6"/>
<circle cx="13" cy="13" r="9.2" fill="#2a6ae8"/>
<path d="M9.6 10.2 Q9.6 6.8 13 6.8 Q16.4 6.8 16.4 9.8 Q16.4 11.6 14.4 12.6 Q13 13.3 13 15" stroke="#fff" stroke-width="2.2" fill="none"/>
<circle cx="13" cy="18.2" r="1.4" fill="#fff"/>
</svg>

<!-- settings group -->
<div class="grp" style="left:349px;top:91px;width:242px;height:456px"></div>
<div class="gl" style="left:353px;top:87.5px;width:44px">Se<u>t</u>tings:</div>
<div class="sunk" style="left:397px;top:82px;width:148px;height:16px;background:#fff"></div>
<div class="ddb" style="left:531px;top:84px;width:13px;height:12px"></div>
<div class="a" style="left:550px;top:89px;width:18px;height:6px;background:#d4d0c8"></div>
<svg class="a" style="left:553px;top:87px" width="14" height="8"><path d="M1 3 L5 3 L3 5.5 Z" fill="#222"/><rect x="5.5" y="1" width="7" height="6" fill="#b8b8b8"/><path d="M5.5 1.5 H12.5 M5.5 3.5 H12.5 M5.5 5.5 H12.5" stroke="#404040" stroke-width="1"/></svg>

<div class="t" style="left:390px;top:126px">Effec<u>t</u>:</div>
<div class="sunk" style="left:425px;top:122px;width:106px;height:17px;background:#fff"></div>
<div class="t" style="left:428px;top:126px">Standard Star</div>
<div class="ddb" style="left:517px;top:124px;width:12px;height:13px"></div>

<!-- main diffraction -->
<div class="grp" style="left:355px;top:162px;width:229px;height:183px"></div>
<div class="gl" style="left:359px;top:158px">Main Diffraction Settings</div>

<!-- effects color -->
<div class="grp" style="left:355px;top:360px;width:229px;height:99px"></div>
<div class="gl" style="left:359px;top:356px">Effects Color</div>

<!-- secondary -->
<div class="grp" style="left:355px;top:474px;width:229px;height:68px"></div>
<div class="gl" style="left:359px;top:470px">Secondary Effects</div>

<div id="rows">
<div class="t" style="left:389px;top:171.6px"><u>Q</u>uantity</div>
<div class="edit" style="left:523px;top:171px">24</div>
<div class="track" style="left:387px;top:189px;width:166px"></div>
<div class="t" style="left:389px;top:200.6px"><u>I</u>ntensity</div>
<div class="edit" style="left:523px;top:200px">50</div>
<div class="track" style="left:387px;top:218px;width:166px"></div>
<svg class="a" style="left:498px;top:214px" width="7" height="11" viewBox="0 0 7 11"><path d="M0.5 10.5 V3.5 L3 0.5 L6.5 3.5 V10.5 Z" fill="#d4d0c8"/><path d="M0.5 10 V3.5 L3 0.8" stroke="#fff" stroke-width="1" fill="none"/><path d="M3 0.8 L6.2 3.5 V10.3 H0.5" stroke="#404040" stroke-width="1.1" fill="none"/></svg>
<div class="t" style="left:389px;top:229.6px"><u>L</u>ength</div>
<div class="edit" style="left:523px;top:227px">68</div>
<div class="track" style="left:387px;top:247px;width:166px"></div>
<svg class="a" style="left:495px;top:243px" width="7" height="11" viewBox="0 0 7 11"><path d="M0.5 10.5 V3.5 L3 0.5 L6.5 3.5 V10.5 Z" fill="#d4d0c8"/><path d="M0.5 10 V3.5 L3 0.8" stroke="#fff" stroke-width="1" fill="none"/><path d="M3 0.8 L6.2 3.5 V10.3 H0.5" stroke="#404040" stroke-width="1.1" fill="none"/></svg>
<div class="t" style="left:389px;top:257.6px"><u>A</u>ngle</div>
<div class="edit" style="left:523px;top:256px">41.9</div>
<div class="track" style="left:387px;top:275px;width:166px"></div>
<svg class="a" style="left:504px;top:271px" width="7" height="11" viewBox="0 0 7 11"><path d="M0.5 10.5 V3.5 L3 0.5 L6.5 3.5 V10.5 Z" fill="#d4d0c8"/><path d="M0.5 10 V3.5 L3 0.8" stroke="#fff" stroke-width="1" fill="none"/><path d="M3 0.8 L6.2 3.5 V10.3 H0.5" stroke="#404040" stroke-width="1.1" fill="none"/></svg>
<div class="t" style="left:389px;top:285.6px"><u>N</u>umber of Points</div>
<div class="edit" style="left:523px;top:285px">10</div>
<div class="track" style="left:387px;top:303px;width:166px"></div>
<svg class="a" style="left:433px;top:299px" width="7" height="11" viewBox="0 0 7 11"><path d="M0.5 10.5 V3.5 L3 0.5 L6.5 3.5 V10.5 Z" fill="#d4d0c8"/><path d="M0.5 10 V3.5 L3 0.8" stroke="#fff" stroke-width="1" fill="none"/><path d="M3 0.8 L6.2 3.5 V10.3 H0.5" stroke="#404040" stroke-width="1.1" fill="none"/></svg>
<div class="t" style="left:389px;top:313.6px">Spike <u>S</u>harpness</div>
<div class="edit" style="left:523px;top:314px">43</div>
<div class="track" style="left:387px;top:331px;width:166px"></div>
<svg class="a" style="left:456px;top:327px" width="7" height="11" viewBox="0 0 7 11"><path d="M0.5 10.5 V3.5 L3 0.5 L6.5 3.5 V10.5 Z" fill="#d4d0c8"/><path d="M0.5 10 V3.5 L3 0.8" stroke="#fff" stroke-width="1" fill="none"/><path d="M3 0.8 L6.2 3.5 V10.3 H0.5" stroke="#404040" stroke-width="1.1" fill="none"/></svg>
<div class="t" style="left:389px;top:371.6px"><u>C</u>olor Saturation</div>
<div class="edit" style="left:523px;top:370px">22</div>
<div class="track" style="left:387px;top:389px;width:166px"></div>
<svg class="a" style="left:483px;top:385px" width="7" height="11" viewBox="0 0 7 11"><path d="M0.5 10.5 V3.5 L3 0.5 L6.5 3.5 V10.5 Z" fill="#d4d0c8"/><path d="M0.5 10 V3.5 L3 0.8" stroke="#fff" stroke-width="1" fill="none"/><path d="M3 0.8 L6.2 3.5 V10.3 H0.5" stroke="#404040" stroke-width="1.1" fill="none"/></svg>
<div class="t" style="left:389px;top:399.6px"><u>R</u>ainbow Intensity</div>
<div class="edit" style="left:523px;top:399px">50</div>
<div class="track" style="left:387px;top:417px;width:166px"></div>
<svg class="a" style="left:466px;top:413px" width="7" height="11" viewBox="0 0 7 11"><path d="M0.5 10.5 V3.5 L3 0.5 L6.5 3.5 V10.5 Z" fill="#d4d0c8"/><path d="M0.5 10 V3.5 L3 0.8" stroke="#fff" stroke-width="1" fill="none"/><path d="M3 0.8 L6.2 3.5 V10.3 H0.5" stroke="#404040" stroke-width="1.1" fill="none"/></svg>
<div class="t" style="left:389px;top:428.6px">Rainbow <u>F</u>requency</div>
<div class="edit" style="left:523px;top:428px">50</div>
<div class="track" style="left:387px;top:446px;width:166px"></div>
<svg class="a" style="left:466px;top:442px" width="7" height="11" viewBox="0 0 7 11"><path d="M0.5 10.5 V3.5 L3 0.5 L6.5 3.5 V10.5 Z" fill="#d4d0c8"/><path d="M0.5 10 V3.5 L3 0.8" stroke="#fff" stroke-width="1" fill="none"/><path d="M3 0.8 L6.2 3.5 V10.3 H0.5" stroke="#404040" stroke-width="1.1" fill="none"/></svg>
<div class="t" style="left:389px;top:485.6px">Se<u>c</u>ondary Spike Intensity</div>
<div class="edit" style="left:523px;top:484px">15</div>
<div class="track" style="left:387px;top:503px;width:166px"></div>
<svg class="a" style="left:410px;top:499px" width="7" height="11" viewBox="0 0 7 11"><path d="M0.5 10.5 V3.5 L3 0.5 L6.5 3.5 V10.5 Z" fill="#d4d0c8"/><path d="M0.5 10 V3.5 L3 0.8" stroke="#fff" stroke-width="1" fill="none"/><path d="M3 0.8 L6.2 3.5 V10.3 H0.5" stroke="#404040" stroke-width="1.1" fill="none"/></svg>
<div class="t" style="left:389px;top:513.6px">Soft Flare Intensit<u>y</u></div>
<div class="edit" style="left:523px;top:513px">68</div>
<div class="track" style="left:387px;top:531px;width:166px"></div>
<svg class="a" style="left:495px;top:527px" width="7" height="11" viewBox="0 0 7 11"><path d="M0.5 10.5 V3.5 L3 0.5 L6.5 3.5 V10.5 Z" fill="#d4d0c8"/><path d="M0.5 10 V3.5 L3 0.8" stroke="#fff" stroke-width="1" fill="none"/><path d="M3 0.8 L6.2 3.5 V10.3 H0.5" stroke="#404040" stroke-width="1.1" fill="none"/></svg>
</div><!--/rows-->

<svg id="icons" class="a" style="left:0;top:0" width="600" height="582" viewBox="0 0 600 582"><defs><filter id="bl03" x="-50%" y="-50%" width="200%" height="200%"><feGaussianBlur stdDeviation="0.35"/></filter><filter id="bl05" x="-50%" y="-50%" width="200%" height="200%"><feGaussianBlur stdDeviation="0.6"/></filter><filter id="bl1" x="-50%" y="-50%" width="200%" height="200%"><feGaussianBlur stdDeviation="1"/></filter><filter id="bl15" x="-50%" y="-50%" width="200%" height="200%"><feGaussianBlur stdDeviation="1.6"/></filter></defs><path d="M376 171.5 L376.60 175.40 L380.5 176 L376.60 176.60 L376 180.5 L375.40 176.60 L371.5 176 L375.40 175.40 Z" fill="#111" fill-opacity="1"/><path d="M367 184.0 L367.52 186.97 L370.5 187.5 L367.52 188.03 L367 191.0 L366.48 188.03 L363.5 187.5 L366.48 186.97 Z" fill="#111" fill-opacity="1"/><path d="M561.5 178 L562.17 180.32 L564.5 181 L562.17 181.68 L561.5 184 L560.83 181.68 L558.5 181 L560.83 180.32 Z" fill="#111" fill-opacity="1"/><path d="M567 174.5 L567.67 176.82 L570 177.5 L567.67 178.18 L567 180.5 L566.33 178.18 L564 177.5 L566.33 176.82 Z" fill="#111" fill-opacity="1"/><path d="M576 172.1 L576.67 174.82 L579.4 175.5 L576.67 176.18 L576 178.9 L575.33 176.18 L572.6 175.5 L575.33 174.82 Z" fill="#111" fill-opacity="1"/><path d="M571.5 181 L572.17 183.32 L574.5 184 L572.17 184.68 L571.5 187 L570.83 184.68 L568.5 184 L570.83 183.32 Z" fill="#111" fill-opacity="1"/><path d="M566 185.5 L566.67 187.82 L569 188.5 L566.67 189.18 L566 191.5 L565.33 189.18 L563 188.5 L565.33 187.82 Z" fill="#111" fill-opacity="1"/><path d="M574.5 188 L575.17 190.32 L577.5 191 L575.17 191.68 L574.5 194 L573.83 191.68 L571.5 191 L573.83 190.32 Z" fill="#111" fill-opacity="1"/><path d="M579 183 L579.67 185.32 L582 186 L579.67 186.68 L579 189 L578.33 186.68 L576 186 L578.33 185.32 Z" fill="#111" fill-opacity="1"/><path d="M560 188 L560.67 190.32 L563 191 L560.67 191.68 L560 194 L559.33 191.68 L557 191 L559.33 190.32 Z" fill="#111" fill-opacity="1"/><path d="M370 200 L370.68 211.32 L382 212 L370.68 212.68 L370 224 L369.32 212.68 L358 212 L369.32 211.32 Z" fill="#b8b4e0" fill-opacity="0.6" filter="url(#bl1)"/><path d="M370 201 L370.90 211.10 L373 212 L370.90 212.90 L370 223 L369.10 212.90 L367 212 L369.10 211.10 Z" fill="#9890d8" fill-opacity="0.5" filter="url(#bl05)"/><circle cx="370" cy="212" r="2.6" fill="#0a0a30"/><path d="M569 198.5 L569.83 210.68 L581 211.5 L569.83 212.32 L569 224.5 L568.17 212.32 L557 211.5 L568.17 210.68 Z" fill="#101040" fill-opacity="1"/><circle cx="569" cy="211.5" r="2.2" fill="#101030"/><path d="M370 232.0 L370.82 238.68 L377 239.5 L370.82 240.32 L370 247.0 L369.18 240.32 L363 239.5 L369.18 238.68 Z" fill="#101030" fill-opacity="1"/><circle cx="370" cy="239.5" r="2" fill="#000020"/><path d="M569 229.5 L569.60 241.90 L581 242.5 L569.60 243.10 L569 255.5 L568.40 243.10 L557 242.5 L568.40 241.90 Z" fill="#202040" fill-opacity="1"/><circle cx="569" cy="242.5" r="1.8" fill="#101030"/><path d="M370 256.5 L370.82 266.68 L381 267.5 L370.82 268.32 L370 278.5 L369.18 268.32 L359 267.5 L369.18 266.68 Z" fill="#101030" fill-opacity="1" transform="rotate(-20 370 267.5)"/><circle cx="370" cy="267.5" r="2.6" fill="#000020"/><path d="M569 256.5 L569.75 267.75 L580 268.5 L569.75 269.25 L569 280.5 L568.25 269.25 L558 268.5 L568.25 267.75 Z" fill="#101030" fill-opacity="1" transform="rotate(-20 569 268.5)"/><circle cx="569" cy="268.5" r="2.6" fill="#000020"/><path d="M370 289 L370.68 296.32 L378 297 L370.68 297.68 L370 305 L369.32 297.68 L362 297 L369.32 296.32 Z" fill="#9090e0" fill-opacity="0.5" transform="rotate(45 370 297)" filter="url(#bl05)"/><path d="M370 288 L370.82 296.18 L378 297 L370.82 297.82 L370 306 L369.18 297.82 L362 297 L369.18 296.18 Z" fill="#101040" fill-opacity="1"/><circle cx="370" cy="297" r="2.6" fill="#000020"/><line x1="569" y1="296.5" x2="577.0" y2="296.5" stroke="#7070d0" stroke-width="0.6" stroke-opacity="0.6"/><line x1="569" y1="296.5" x2="576.7" y2="298.6" stroke="#7070d0" stroke-width="0.6" stroke-opacity="0.6"/><line x1="569" y1="296.5" x2="575.9" y2="300.5" stroke="#7070d0" stroke-width="0.6" stroke-opacity="0.6"/><line x1="569" y1="296.5" x2="574.7" y2="302.2" stroke="#7070d0" stroke-width="0.6" stroke-opacity="0.6"/><line x1="569" y1="296.5" x2="573.0" y2="303.4" stroke="#7070d0" stroke-width="0.6" stroke-opacity="0.6"/><line x1="569" y1="296.5" x2="571.1" y2="304.2" stroke="#7070d0" stroke-width="0.6" stroke-opacity="0.6"/><line x1="569" y1="296.5" x2="569.0" y2="304.5" stroke="#7070d0" stroke-width="0.6" stroke-opacity="0.6"/><line x1="569" y1="296.5" x2="566.9" y2="304.2" stroke="#7070d0" stroke-width="0.6" stroke-opacity="0.6"/><line x1="569" y1="296.5" x2="565.0" y2="303.4" stroke="#7070d0" stroke-width="0.6" stroke-opacity="0.6"/><line x1="569" y1="296.5" x2="563.3" y2="302.2" stroke="#7070d0" stroke-width="0.6" stroke-opacity="0.6"/><line x1="569" y1="296.5" x2="562.1" y2="300.5" stroke="#7070d0" stroke-width="0.6" stroke-opacity="0.6"/><line x1="569" y1="296.5" x2="561.3" y2="298.6" stroke="#7070d0" stroke-width="0.6" stroke-opacity="0.6"/><line x1="569" y1="296.5" x2="561.0" y2="296.5" stroke="#7070d0" stroke-width="0.6" stroke-opacity="0.6"/><line x1="569" y1="296.5" x2="561.3" y2="294.4" stroke="#7070d0" stroke-width="0.6" stroke-opacity="0.6"/><line x1="569" y1="296.5" x2="562.1" y2="292.5" stroke="#7070d0" stroke-width="0.6" stroke-opacity="0.6"/><line x1="569" y1="296.5" x2="563.3" y2="290.8" stroke="#7070d0" stroke-width="0.6" stroke-opacity="0.6"/><line x1="569" y1="296.5" x2="565.0" y2="289.6" stroke="#7070d0" stroke-width="0.6" stroke-opacity="0.6"/><line x1="569" y1="296.5" x2="566.9" y2="288.8" stroke="#7070d0" stroke-width="0.6" stroke-opacity="0.6"/><line x1="569" y1="296.5" x2="569.0" y2="288.5" stroke="#7070d0" stroke-width="0.6" stroke-opacity="0.6"/><line x1="569" y1="296.5" x2="571.1" y2="288.8" stroke="#7070d0" stroke-width="0.6" stroke-opacity="0.6"/><line x1="569" y1="296.5" x2="573.0" y2="289.6" stroke="#7070d0" stroke-width="0.6" stroke-opacity="0.6"/><line x1="569" y1="296.5" x2="574.7" y2="290.8" stroke="#7070d0" stroke-width="0.6" stroke-opacity="0.6"/><line x1="569" y1="296.5" x2="575.9" y2="292.5" stroke="#7070d0" stroke-width="0.6" stroke-opacity="0.6"/><line x1="569" y1="296.5" x2="576.7" y2="294.4" stroke="#7070d0" stroke-width="0.6" stroke-opacity="0.6"/><circle cx="569" cy="296.5" r="4.5" fill="#9898e0" filter="url(#bl1)" fill-opacity="0.7"/><circle cx="569" cy="296.5" r="2.8" fill="#000010"/><path d="M370 314 L373.60 322.40 L383 326 L373.60 329.60 L370 338 L366.40 329.60 L357 326 L366.40 322.40 Z" fill="#7080f0" fill-opacity="0.85" filter="url(#bl15)"/><circle cx="370" cy="326" r="3" fill="#000010" filter="url(#bl05)"/><path d="M569 315.7 L569.60 325.10 L577 325.7 L569.60 326.30 L569 335.7 L568.40 326.30 L561 325.7 L568.40 325.10 Z" fill="#101030" fill-opacity="1"/><path d="M569 314.7 L569.90 324.80 L578 325.7 L569.90 326.60 L569 336.7 L568.10 326.60 L560 325.7 L568.10 324.80 Z" fill="#8080e0" fill-opacity="0.4" filter="url(#bl05)"/><linearGradient id="x37038211" gradientUnits="userSpaceOnUse" x1="370" y1="382" x2="379.5" y2="391.5"><stop offset="0" stop-color="#000" stop-opacity="1"/><stop offset="0.5" stop-color="#303030" stop-opacity="0.85"/><stop offset="1" stop-color="#b0b0b0" stop-opacity="0.15"/></linearGradient><polygon points="368.98,383.02 379.12,391.88 379.88,391.12 371.02,380.98" fill="url(#x37038211)" filter="url(#bl03)"/><linearGradient id="x3703821m1" gradientUnits="userSpaceOnUse" x1="370" y1="382" x2="379.5" y2="372.5"><stop offset="0" stop-color="#000" stop-opacity="1"/><stop offset="0.5" stop-color="#303030" stop-opacity="0.85"/><stop offset="1" stop-color="#b0b0b0" stop-opacity="0.15"/></linearGradient><polygon points="371.02,383.02 379.88,372.88 379.12,372.12 368.98,380.98" fill="url(#x3703821m1)" filter="url(#bl03)"/><linearGradient id="x370382m11" gradientUnits="userSpaceOnUse" x1="370" y1="382" x2="360.5" y2="391.5"><stop offset="0" stop-color="#000" stop-opacity="1"/><stop offset="0.5" stop-color="#303030" stop-opacity="0.85"/><stop offset="1" stop-color="#b0b0b0" stop-opacity="0.15"/></linearGradient><polygon points="368.98,380.98 360.12,391.12 360.88,391.88 371.02,383.02" fill="url(#x370382m11)" filter="url(#bl03)"/><linearGradient id="x370382m1m1" gradientUnits="userSpaceOnUse" x1="370" y1="382" x2="360.5" y2="372.5"><stop offset="0" stop-color="#000" stop-opacity="1"/><stop offset="0.5" stop-color="#303030" stop-opacity="0.85"/><stop offset="1" stop-color="#b0b0b0" stop-opacity="0.15"/></linearGradient><polygon points="371.02,380.98 360.88,372.12 360.12,372.88 368.98,383.02" fill="url(#x370382m1m1)" filter="url(#bl03)"/><circle cx="370" cy="382" r="2" fill="#000" filter="url(#bl03)"/><linearGradient id="x37041011" gradientUnits="userSpaceOnUse" x1="370" y1="410.5" x2="380" y2="420.5"><stop offset="0" stop-color="#000" stop-opacity="1"/><stop offset="0.3" stop-color="#1010ff" stop-opacity="1"/><stop offset="0.85" stop-color="#4040ff" stop-opacity="0.9"/><stop offset="1" stop-color="#a0a0ff" stop-opacity="0.3"/></linearGradient><polygon points="368.76,411.74 379.53,420.97 380.47,420.03 371.24,409.26" fill="url(#x37041011)" filter="url(#bl03)"/><linearGradient id="x3704101m1" gradientUnits="userSpaceOnUse" x1="370" y1="410.5" x2="380" y2="400.5"><stop offset="0" stop-color="#000" stop-opacity="1"/><stop offset="0.3" stop-color="#1010ff" stop-opacity="1"/><stop offset="0.85" stop-color="#4040ff" stop-opacity="0.9"/><stop offset="1" stop-color="#a0a0ff" stop-opacity="0.3"/></linearGradient><polygon points="371.24,411.74 380.47,400.97 379.53,400.03 368.76,409.26" fill="url(#x3704101m1)" filter="url(#bl03)"/><linearGradient id="x370410m11" gradientUnits="userSpaceOnUse" x1="370" y1="410.5" x2="360" y2="420.5"><stop offset="0" stop-color="#000" stop-opacity="1"/><stop offset="0.3" stop-color="#1010ff" stop-opacity="1"/><stop offset="0.85" stop-color="#4040ff" stop-opacity="0.9"/><stop offset="1" stop-color="#a0a0ff" stop-opacity="0.3"/></linearGradient><polygon points="368.76,409.26 359.53,420.03 360.47,420.97 371.24,411.74" fill="url(#x370410m11)" filter="url(#bl03)"/><linearGradient id="x370410m1m1" gradientUnits="userSpaceOnUse" x1="370" y1="410.5" x2="360" y2="400.5"><stop offset="0" stop-color="#000" stop-opacity="1"/><stop offset="0.3" stop-color="#1010ff" stop-opacity="1"/><stop offset="0.85" stop-color="#4040ff" stop-opacity="0.9"/><stop offset="1" stop-color="#a0a0ff" stop-opacity="0.3"/></linearGradient><polygon points="371.24,409.26 360.47,400.03 359.53,400.97 368.76,411.74" fill="url(#x370410m1m1)" filter="url(#bl03)"/><circle cx="370" cy="410.5" r="2.6" fill="#000" filter="url(#bl03)"/><linearGradient id="x37043911" gradientUnits="userSpaceOnUse" x1="370" y1="439" x2="380" y2="449"><stop offset="0" stop-color="#000" stop-opacity="1"/><stop offset="0.3" stop-color="#1010ff" stop-opacity="1"/><stop offset="0.6" stop-color="#2060ff" stop-opacity="1"/><stop offset="0.78" stop-color="#20c040" stop-opacity="1"/><stop offset="0.92" stop-color="#e0e020" stop-opacity="1"/><stop offset="1" stop-color="#f0c060" stop-opacity="0.5"/></linearGradient><polygon points="368.76,440.24 379.53,449.47 380.47,448.53 371.24,437.76" fill="url(#x37043911)" filter="url(#bl03)"/><linearGradient id="x3704391m1" gradientUnits="userSpaceOnUse" x1="370" y1="439" x2="380" y2="429"><stop offset="0" stop-color="#000" stop-opacity="1"/><stop offset="0.3" stop-color="#1010ff" stop-opacity="1"/><stop offset="0.6" stop-color="#2060ff" stop-opacity="1"/><stop offset="0.78" stop-color="#20c040" stop-opacity="1"/><stop offset="0.92" stop-color="#e0e020" stop-opacity="1"/><stop offset="1" stop-color="#f0c060" stop-opacity="0.5"/></linearGradient><polygon points="371.24,440.24 380.47,429.47 379.53,428.53 368.76,437.76" fill="url(#x3704391m1)" filter="url(#bl03)"/><linearGradient id="x370439m11" gradientUnits="userSpaceOnUse" x1="370" y1="439" x2="360" y2="449"><stop offset="0" stop-color="#000" stop-opacity="1"/><stop offset="0.3" stop-color="#1010ff" stop-opacity="1"/><stop offset="0.6" stop-color="#2060ff" stop-opacity="1"/><stop offset="0.78" stop-color="#20c040" stop-opacity="1"/><stop offset="0.92" stop-color="#e0e020" stop-opacity="1"/><stop offset="1" stop-color="#f0c060" stop-opacity="0.5"/></linearGradient><polygon points="368.76,437.76 359.53,448.53 360.47,449.47 371.24,440.24" fill="url(#x370439m11)" filter="url(#bl03)"/><linearGradient id="x370439m1m1" gradientUnits="userSpaceOnUse" x1="370" y1="439" x2="360" y2="429"><stop offset="0" stop-color="#000" stop-opacity="1"/><stop offset="0.3" stop-color="#1010ff" stop-opacity="1"/><stop offset="0.6" stop-color="#2060ff" stop-opacity="1"/><stop offset="0.78" stop-color="#20c040" stop-opacity="1"/><stop offset="0.92" stop-color="#e0e020" stop-opacity="1"/><stop offset="1" stop-color="#f0c060" stop-opacity="0.5"/></linearGradient><polygon points="371.24,437.76 360.47,428.53 359.53,429.47 368.76,440.24" fill="url(#x370439m1m1)" filter="url(#bl03)"/><circle cx="370" cy="439" r="2.4" fill="#202020" filter="url(#bl03)"/><linearGradient id="x56938211" gradientUnits="userSpaceOnUse" x1="569" y1="382" x2="577" y2="390"><stop offset="0" stop-color="#000" stop-opacity="1"/><stop offset="0.3" stop-color="#1010ff" stop-opacity="1"/><stop offset="0.6" stop-color="#2040ff" stop-opacity="1"/><stop offset="0.72" stop-color="#20c060" stop-opacity="1"/><stop offset="0.85" stop-color="#ff2020" stop-opacity="1"/><stop offset="1" stop-color="#ff60ff" stop-opacity="0.6"/></linearGradient><polygon points="567.87,383.13 576.58,390.42 577.42,389.58 570.13,380.87" fill="url(#x56938211)" filter="url(#bl03)"/><linearGradient id="x5693821m1" gradientUnits="userSpaceOnUse" x1="569" y1="382" x2="577" y2="374"><stop offset="0" stop-color="#000" stop-opacity="1"/><stop offset="0.3" stop-color="#1010ff" stop-opacity="1"/><stop offset="0.6" stop-color="#2040ff" stop-opacity="1"/><stop offset="0.72" stop-color="#20c060" stop-opacity="1"/><stop offset="0.85" stop-color="#ff2020" stop-opacity="1"/><stop offset="1" stop-color="#ff60ff" stop-opacity="0.6"/></linearGradient><polygon points="570.13,383.13 577.42,374.42 576.58,373.58 567.87,380.87" fill="url(#x5693821m1)" filter="url(#bl03)"/><linearGradient id="x569382m11" gradientUnits="userSpaceOnUse" x1="569" y1="382" x2="561" y2="390"><stop offset="0" stop-color="#000" stop-opacity="1"/><stop offset="0.3" stop-color="#1010ff" stop-opacity="1"/><stop offset="0.6" stop-color="#2040ff" stop-opacity="1"/><stop offset="0.72" stop-color="#20c060" stop-opacity="1"/><stop offset="0.85" stop-color="#ff2020" stop-opacity="1"/><stop offset="1" stop-color="#ff60ff" stop-opacity="0.6"/></linearGradient><polygon points="567.87,380.87 560.58,389.58 561.42,390.42 570.13,383.13" fill="url(#x569382m11)" filter="url(#bl03)"/><linearGradient id="x569382m1m1" gradientUnits="userSpaceOnUse" x1="569" y1="382" x2="561" y2="374"><stop offset="0" stop-color="#000" stop-opacity="1"/><stop offset="0.3" stop-color="#1010ff" stop-opacity="1"/><stop offset="0.6" stop-color="#2040ff" stop-opacity="1"/><stop offset="0.72" stop-color="#20c060" stop-opacity="1"/><stop offset="0.85" stop-color="#ff2020" stop-opacity="1"/><stop offset="1" stop-color="#ff60ff" stop-opacity="0.6"/></linearGradient><polygon points="570.13,380.87 561.42,373.58 560.58,374.42 567.87,383.13" fill="url(#x569382m1m1)" filter="url(#bl03)"/><circle cx="569" cy="382" r="2.2" fill="#000" filter="url(#bl03)"/><linearGradient id="x56941011" gradientUnits="userSpaceOnUse" x1="569" y1="410.5" x2="580" y2="421.5"><stop offset="0" stop-color="#000" stop-opacity="1"/><stop offset="0.35" stop-color="#100020" stop-opacity="1"/><stop offset="0.55" stop-color="#2020ff" stop-opacity="1"/><stop offset="0.7" stop-color="#20c0c0" stop-opacity="1"/><stop offset="0.8" stop-color="#ff2020" stop-opacity="1"/><stop offset="0.9" stop-color="#ffa020" stop-opacity="1"/><stop offset="1" stop-color="#ff40ff" stop-opacity="0.7"/></linearGradient><polygon points="567.64,411.86 579.49,422.01 580.51,420.99 570.36,409.14" fill="url(#x56941011)" filter="url(#bl03)"/><linearGradient id="x5694101m1" gradientUnits="userSpaceOnUse" x1="569" y1="410.5" x2="580" y2="399.5"><stop offset="0" stop-color="#000" stop-opacity="1"/><stop offset="0.35" stop-color="#100020" stop-opacity="1"/><stop offset="0.55" stop-color="#2020ff" stop-opacity="1"/><stop offset="0.7" stop-color="#20c0c0" stop-opacity="1"/><stop offset="0.8" stop-color="#ff2020" stop-opacity="1"/><stop offset="0.9" stop-color="#ffa020" stop-opacity="1"/><stop offset="1" stop-color="#ff40ff" stop-opacity="0.7"/></linearGradient><polygon points="570.36,411.86 580.51,400.01 579.49,398.99 567.64,409.14" fill="url(#x5694101m1)" filter="url(#bl03)"/><linearGradient id="x569410m11" gradientUnits="userSpaceOnUse" x1="569" y1="410.5" x2="558" y2="421.5"><stop offset="0" stop-color="#000" stop-opacity="1"/><stop offset="0.35" stop-color="#100020" stop-opacity="1"/><stop offset="0.55" stop-color="#2020ff" stop-opacity="1"/><stop offset="0.7" stop-color="#20c0c0" stop-opacity="1"/><stop offset="0.8" stop-color="#ff2020" stop-opacity="1"/><stop offset="0.9" stop-color="#ffa020" stop-opacity="1"/><stop offset="1" stop-color="#ff40ff" stop-opacity="0.7"/></linearGradient><polygon points="567.64,409.14 557.49,420.99 558.51,422.01 570.36,411.86" fill="url(#x569410m11)" filter="url(#bl03)"/><linearGradient id="x569410m1m1" gradientUnits="userSpaceOnUse" x1="569" y1="410.5" x2="558" y2="399.5"><stop offset="0" stop-color="#000" stop-opacity="1"/><stop offset="0.35" stop-color="#100020" stop-opacity="1"/><stop offset="0.55" stop-color="#2020ff" stop-opacity="1"/><stop offset="0.7" stop-color="#20c0c0" stop-opacity="1"/><stop offset="0.8" stop-color="#ff2020" stop-opacity="1"/><stop offset="0.9" stop-color="#ffa020" stop-opacity="1"/><stop offset="1" stop-color="#ff40ff" stop-opacity="0.7"/></linearGradient><polygon points="570.36,409.14 558.51,398.99 557.49,400.01 567.64,411.86" fill="url(#x569410m1m1)" filter="url(#bl03)"/><circle cx="569" cy="410.5" r="3" fill="#000" filter="url(#bl03)"/><linearGradient id="x56944011" gradientUnits="userSpaceOnUse" x1="569" y1="440" x2="580" y2="451"><stop offset="0" stop-color="#300010" stop-opacity="1"/><stop offset="0.3" stop-color="#ff2020" stop-opacity="1"/><stop offset="0.45" stop-color="#2020ff" stop-opacity="1"/><stop offset="0.6" stop-color="#20ff20" stop-opacity="1"/><stop offset="0.7" stop-color="#ff20ff" stop-opacity="1"/><stop offset="0.85" stop-color="#2040ff" stop-opacity="1"/><stop offset="1" stop-color="#ff80a0" stop-opacity="0.6"/></linearGradient><polygon points="567.76,441.24 579.53,451.47 580.47,450.53 570.24,438.76" fill="url(#x56944011)" filter="url(#bl03)"/><linearGradient id="x5694401m1" gradientUnits="userSpaceOnUse" x1="569" y1="440" x2="580" y2="429"><stop offset="0" stop-color="#300010" stop-opacity="1"/><stop offset="0.3" stop-color="#ff2020" stop-opacity="1"/><stop offset="0.45" stop-color="#2020ff" stop-opacity="1"/><stop offset="0.6" stop-color="#20ff20" stop-opacity="1"/><stop offset="0.7" stop-color="#ff20ff" stop-opacity="1"/><stop offset="0.85" stop-color="#2040ff" stop-opacity="1"/><stop offset="1" stop-color="#ff80a0" stop-opacity="0.6"/></linearGradient><polygon points="570.24,441.24 580.47,429.47 579.53,428.53 567.76,438.76" fill="url(#x5694401m1)" filter="url(#bl03)"/><linearGradient id="x569440m11" gradientUnits="userSpaceOnUse" x1="569" y1="440" x2="558" y2="451"><stop offset="0" stop-color="#300010" stop-opacity="1"/><stop offset="0.3" stop-color="#ff2020" stop-opacity="1"/><stop offset="0.45" stop-color="#2020ff" stop-opacity="1"/><stop offset="0.6" stop-color="#20ff20" stop-opacity="1"/><stop offset="0.7" stop-color="#ff20ff" stop-opacity="1"/><stop offset="0.85" stop-color="#2040ff" stop-opacity="1"/><stop offset="1" stop-color="#ff80a0" stop-opacity="0.6"/></linearGradient><polygon points="567.76,438.76 557.53,450.53 558.47,451.47 570.24,441.24" fill="url(#x569440m11)" filter="url(#bl03)"/><linearGradient id="x569440m1m1" gradientUnits="userSpaceOnUse" x1="569" y1="440" x2="558" y2="429"><stop offset="0" stop-color="#300010" stop-opacity="1"/><stop offset="0.3" stop-color="#ff2020" stop-opacity="1"/><stop offset="0.45" stop-color="#2020ff" stop-opacity="1"/><stop offset="0.6" stop-color="#20ff20" stop-opacity="1"/><stop offset="0.7" stop-color="#ff20ff" stop-opacity="1"/><stop offset="0.85" stop-color="#2040ff" stop-opacity="1"/><stop offset="1" stop-color="#ff80a0" stop-opacity="0.6"/></linearGradient><polygon points="570.24,438.76 558.47,428.53 557.53,429.47 567.76,441.24" fill="url(#x569440m1m1)" filter="url(#bl03)"/><circle cx="569" cy="440" r="2.6" fill="#400010" filter="url(#bl03)"/><path d="M370 487.5 L371.50 494.00 L377 495.5 L371.50 497.00 L370 503.5 L368.50 497.00 L363 495.5 L368.50 494.00 Z" fill="#6060d0" fill-opacity="0.9" filter="url(#bl05)"/><circle cx="370" cy="495.5" r="2.4" fill="#000"/><path d="M370 516.3 L371.50 522.80 L377 524.3 L371.50 525.80 L370 532.3 L368.50 525.80 L363 524.3 L368.50 522.80 Z" fill="#6060d0" fill-opacity="0.9" filter="url(#bl05)"/><circle cx="370" cy="524.3" r="2.4" fill="#000"/><line x1="569" y1="495" x2="579.0" y2="495.0" stroke="#605878" stroke-width="0.5" stroke-opacity="0.55"/><line x1="569" y1="495" x2="578.8" y2="497.1" stroke="#605878" stroke-width="0.5" stroke-opacity="0.55"/><line x1="569" y1="495" x2="578.1" y2="499.1" stroke="#605878" stroke-width="0.5" stroke-opacity="0.55"/><line x1="569" y1="495" x2="577.1" y2="500.9" stroke="#605878" stroke-width="0.5" stroke-opacity="0.55"/><line x1="569" y1="495" x2="575.7" y2="502.4" stroke="#605878" stroke-width="0.5" stroke-opacity="0.55"/><line x1="569" y1="495" x2="574.0" y2="503.7" stroke="#605878" stroke-width="0.5" stroke-opacity="0.55"/><line x1="569" y1="495" x2="572.1" y2="504.5" stroke="#605878" stroke-width="0.5" stroke-opacity="0.55"/><line x1="569" y1="495" x2="570.0" y2="504.9" stroke="#605878" stroke-width="0.5" stroke-opacity="0.55"/><line x1="569" y1="495" x2="568.0" y2="504.9" stroke="#605878" stroke-width="0.5" stroke-opacity="0.55"/><line x1="569" y1="495" x2="565.9" y2="504.5" stroke="#605878" stroke-width="0.5" stroke-opacity="0.55"/><line x1="569" y1="495" x2="564.0" y2="503.7" stroke="#605878" stroke-width="0.5" stroke-opacity="0.55"/><line x1="569" y1="495" x2="562.3" y2="502.4" stroke="#605878" stroke-width="0.5" stroke-opacity="0.55"/><line x1="569" y1="495" x2="560.9" y2="500.9" stroke="#605878" stroke-width="0.5" stroke-opacity="0.55"/><line x1="569" y1="495" x2="559.9" y2="499.1" stroke="#605878" stroke-width="0.5" stroke-opacity="0.55"/><line x1="569" y1="495" x2="559.2" y2="497.1" stroke="#605878" stroke-width="0.5" stroke-opacity="0.55"/><line x1="569" y1="495" x2="559.0" y2="495.0" stroke="#605878" stroke-width="0.5" stroke-opacity="0.55"/><line x1="569" y1="495" x2="559.2" y2="492.9" stroke="#605878" stroke-width="0.5" stroke-opacity="0.55"/><line x1="569" y1="495" x2="559.9" y2="490.9" stroke="#605878" stroke-width="0.5" stroke-opacity="0.55"/><line x1="569" y1="495" x2="560.9" y2="489.1" stroke="#605878" stroke-width="0.5" stroke-opacity="0.55"/><line x1="569" y1="495" x2="562.3" y2="487.6" stroke="#605878" stroke-width="0.5" stroke-opacity="0.55"/><line x1="569" y1="495" x2="564.0" y2="486.3" stroke="#605878" stroke-width="0.5" stroke-opacity="0.55"/><line x1="569" y1="495" x2="565.9" y2="485.5" stroke="#605878" stroke-width="0.5" stroke-opacity="0.55"/><line x1="569" y1="495" x2="568.0" y2="485.1" stroke="#605878" stroke-width="0.5" stroke-opacity="0.55"/><line x1="569" y1="495" x2="570.0" y2="485.1" stroke="#605878" stroke-width="0.5" stroke-opacity="0.55"/><line x1="569" y1="495" x2="572.1" y2="485.5" stroke="#605878" stroke-width="0.5" stroke-opacity="0.55"/><line x1="569" y1="495" x2="574.0" y2="486.3" stroke="#605878" stroke-width="0.5" stroke-opacity="0.55"/><line x1="569" y1="495" x2="575.7" y2="487.6" stroke="#605878" stroke-width="0.5" stroke-opacity="0.55"/><line x1="569" y1="495" x2="577.1" y2="489.1" stroke="#605878" stroke-width="0.5" stroke-opacity="0.55"/><line x1="569" y1="495" x2="578.1" y2="490.9" stroke="#605878" stroke-width="0.5" stroke-opacity="0.55"/><line x1="569" y1="495" x2="578.8" y2="492.9" stroke="#605878" stroke-width="0.5" stroke-opacity="0.55"/><circle cx="569" cy="495" r="6" fill="#404080" fill-opacity="0.35" filter="url(#bl1)"/><path d="M569 484 L571.40 492.60 L579 495 L571.40 497.40 L569 506 L566.60 497.40 L559 495 L566.60 492.60 Z" fill="#0a0a60" fill-opacity="1" filter="url(#bl03)"/><circle cx="569" cy="495" r="3.2" fill="#0a0a50"/><circle cx="569" cy="524.4" r="10" fill="#808080" fill-opacity="0.45" filter="url(#bl15)"/><path d="M569 514.4 L571.55 521.85 L578 524.4 L571.55 526.95 L569 534.4 L566.45 526.95 L560 524.4 L566.45 521.85 Z" fill="#000" fill-opacity="1" filter="url(#bl05)"/><circle cx="569" cy="524.4" r="3.2" fill="#000"/></svg><!--/icons-->
<!-- dropdown list -->
<div class="a" style="left:425px;top:138px;width:107px;height:75px;background:#fff;border:1px solid #000">
<div class="li" style="top:1px;background:#0a246a;color:#fff">Standard Star</div>
<div class="li" style="top:11px">Star Burst</div>
<div class="li" style="top:21px">Hyper Star</div>
<div class="li" style="top:32px">Hollywood Star</div>
<div class="li" style="top:42px">North Star</div>
<div class="li" style="top:52px">Vector Star</div>
<div class="li" style="top:63px">Religious Cross</div>
</div>
</body></html>
